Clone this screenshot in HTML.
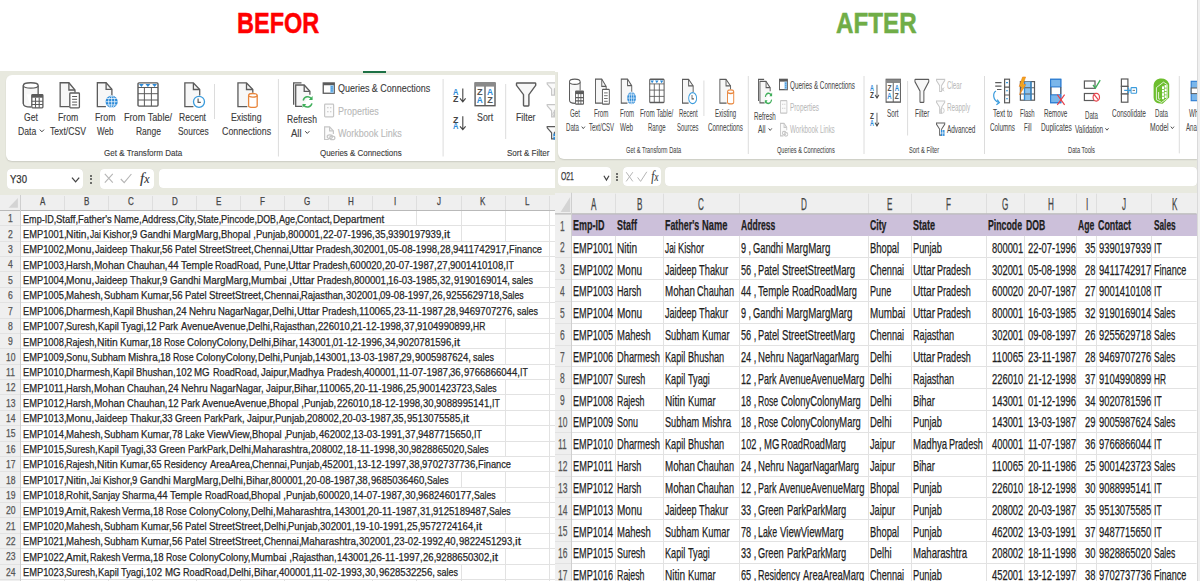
<!DOCTYPE html>
<html><head><meta charset="utf-8"><style>
html,body{margin:0;padding:0;background:#fff;}
body{width:1200px;height:581px;position:relative;overflow:hidden;font-family:"Liberation Sans",sans-serif;}
.t{position:absolute;white-space:nowrap;transform-origin:0 0;-webkit-text-stroke:0.25px currentColor;}
.r{position:absolute;}
.clip{position:absolute;overflow:hidden;}
svg{position:absolute;left:0;top:0;}
</style></head><body>
<div class="t" style="left:237.40px;top:8.32px;font-size:29.506px;line-height:29.506px;color:#ff0000;transform:scaleX(0.7969);font-weight:bold;-webkit-text-stroke:0.5px #ff0000;">BEFOR</div>
<div class="t" style="left:835.60px;top:8.32px;font-size:29.506px;line-height:29.506px;color:#70ad47;transform:scaleX(0.8196);font-weight:bold;-webkit-text-stroke:0.5px #70ad47;">AFTER</div>
<div class="clip" style="left:0;top:0;width:555px;height:581px;">
<div class="r" style="left:0.00px;top:71.00px;width:555.00px;height:510.00px;background:#e8e9df;"></div>
<div class="r" style="left:363.00px;top:71.00px;width:23.30px;height:2.30px;background:#1e7145;"></div>
<div class="r" style="left:6.00px;top:75.00px;width:560.00px;height:86.20px;background:#fff;border-radius:6px;box-shadow:0 1px 1.5px rgba(0,0,0,0.13);"></div>
<div class="t" style="left:23.90px;top:111.99px;font-size:10.756px;line-height:10.756px;color:#3b3b3b;transform:scaleX(0.7960);-webkit-text-stroke:0.12px currentColor;">Get</div>
<div class="t" style="left:17.70px;top:125.89px;font-size:10.756px;line-height:10.756px;color:#3b3b3b;transform:scaleX(0.8055);-webkit-text-stroke:0.12px currentColor;">Data</div>
<div class="t" style="left:57.70px;top:111.99px;font-size:10.756px;line-height:10.756px;color:#3b3b3b;transform:scaleX(0.8089);-webkit-text-stroke:0.12px currentColor;">From</div>
<div class="t" style="left:50.00px;top:125.89px;font-size:10.756px;line-height:10.756px;color:#3b3b3b;transform:scaleX(0.8030);-webkit-text-stroke:0.12px currentColor;">Text/CSV</div>
<div class="t" style="left:95.00px;top:111.99px;font-size:10.756px;line-height:10.756px;color:#3b3b3b;transform:scaleX(0.8169);-webkit-text-stroke:0.12px currentColor;">From</div>
<div class="t" style="left:97.05px;top:125.89px;font-size:10.756px;line-height:10.756px;color:#3b3b3b;transform:scaleX(0.7527);-webkit-text-stroke:0.12px currentColor;">Web</div>
<div class="t" style="left:124.30px;top:111.99px;font-size:10.756px;line-height:10.756px;color:#3b3b3b;transform:scaleX(0.8500);-webkit-text-stroke:0.12px currentColor;">From Table/</div>
<div class="t" style="left:135.90px;top:125.89px;font-size:10.756px;line-height:10.756px;color:#3b3b3b;transform:scaleX(0.7887);-webkit-text-stroke:0.12px currentColor;">Range</div>
<div class="t" style="left:179.30px;top:111.99px;font-size:10.756px;line-height:10.756px;color:#3b3b3b;transform:scaleX(0.7923);-webkit-text-stroke:0.12px currentColor;">Recent</div>
<div class="t" style="left:177.60px;top:125.89px;font-size:10.756px;line-height:10.756px;color:#3b3b3b;transform:scaleX(0.7780);-webkit-text-stroke:0.12px currentColor;">Sources</div>
<div class="t" style="left:230.55px;top:111.99px;font-size:10.756px;line-height:10.756px;color:#3b3b3b;transform:scaleX(0.8098);-webkit-text-stroke:0.12px currentColor;">Existing</div>
<div class="t" style="left:221.50px;top:125.89px;font-size:10.756px;line-height:10.756px;color:#3b3b3b;transform:scaleX(0.8212);-webkit-text-stroke:0.12px currentColor;">Connections</div>
<div class="t" style="left:286.60px;top:113.69px;font-size:10.756px;line-height:10.756px;color:#3b3b3b;transform:scaleX(0.7939);-webkit-text-stroke:0.12px currentColor;">Refresh</div>
<div class="t" style="left:291.25px;top:127.69px;font-size:10.756px;line-height:10.756px;color:#3b3b3b;transform:scaleX(0.8784);-webkit-text-stroke:0.12px currentColor;">All</div>
<div class="t" style="left:477.00px;top:112.09px;font-size:10.756px;line-height:10.756px;color:#3b3b3b;transform:scaleX(0.8212);-webkit-text-stroke:0.12px currentColor;">Sort</div>
<div class="t" style="left:516.20px;top:112.09px;font-size:10.756px;line-height:10.756px;color:#3b3b3b;transform:scaleX(0.8158);-webkit-text-stroke:0.12px currentColor;">Filter</div>
<div class="t" style="left:337.80px;top:83.29px;font-size:10.756px;line-height:10.756px;color:#3b3b3b;transform:scaleX(0.8336);-webkit-text-stroke:0.12px currentColor;">Queries &amp; Connections</div>
<div class="t" style="left:338.00px;top:106.09px;font-size:10.756px;line-height:10.756px;color:#b9b9b9;transform:scaleX(0.8323);-webkit-text-stroke:0.12px currentColor;">Properties</div>
<div class="t" style="left:338.00px;top:127.79px;font-size:10.756px;line-height:10.756px;color:#b9b9b9;transform:scaleX(0.8359);-webkit-text-stroke:0.12px currentColor;">Workbook Links</div>
<div class="t" style="left:103.75px;top:148.65px;font-size:9.157px;line-height:9.157px;color:#3b3b3b;transform:scaleX(0.8792);-webkit-text-stroke:0.12px currentColor;">Get &amp; Transform Data</div>
<div class="t" style="left:320.00px;top:148.65px;font-size:9.157px;line-height:9.157px;color:#3b3b3b;transform:scaleX(0.8687);-webkit-text-stroke:0.12px currentColor;">Queries &amp; Connections</div>
<div class="t" style="left:507.40px;top:148.65px;font-size:9.157px;line-height:9.157px;color:#3b3b3b;transform:scaleX(0.8813);-webkit-text-stroke:0.12px currentColor;">Sort &amp; Filter</div>
<div class="r" style="left:7.00px;top:169.00px;width:76.00px;height:20.00px;background:#fff;border-radius:4px;box-shadow:0 0 0.5px rgba(0,0,0,0.15);"></div>
<div class="t" style="left:10.20px;top:173.60px;font-size:11.337px;line-height:11.337px;color:#333;transform:scaleX(0.8427);">Y30</div>
<div class="r" style="left:90.40px;top:174.80px;width:2.00px;height:2.00px;background:#444;border-radius:1px;"></div>
<div class="r" style="left:90.40px;top:178.20px;width:2.00px;height:2.00px;background:#444;border-radius:1px;"></div>
<div class="r" style="left:90.40px;top:181.60px;width:2.00px;height:2.00px;background:#444;border-radius:1px;"></div>
<div class="r" style="left:99.70px;top:169.00px;width:54.60px;height:19.60px;background:#fff;border-radius:4px;box-shadow:0 0 0.5px rgba(0,0,0,0.15);"></div>
<div class="r" style="left:159.20px;top:169.00px;width:400.00px;height:19.30px;background:#fff;border-radius:4px;box-shadow:0 0 0.5px rgba(0,0,0,0.15);"></div>
<svg width="1200" height="581" viewBox="0 0 1200 581">

<defs>
<g id="i-getdata" fill="none" stroke="#5b5b5b" stroke-width="1.3">
  <path d="M0.65 3.3 V21.6 C0.65 23.6 4 24.9 8.3 24.9" fill="#f7f7f7"/>
  <path d="M0.65 3.3 H15.5 V12" fill="#f7f7f7" stroke="none"/>
  <rect x="0.65" y="3.3" width="14.8" height="9" fill="#f7f7f7" stroke="none"/>
  <path d="M0.65 3.3 V21.6 M15.45 3.3 V12"/>
  <ellipse cx="8.05" cy="3.3" rx="7.4" ry="2.65" fill="#fff"/>
  <rect x="9.1" y="12.6" width="11.1" height="13.1" rx="0.8" fill="#fff"/>
  <rect x="9.1" y="12.6" width="11.1" height="3" fill="#5b5b5b" stroke="none"/>
  <path d="M9.1 19.1 H20.2 M9.1 22.4 H20.2 M12.8 15.6 V25.7 M16.5 15.6 V25.7" stroke-width="1.1"/>
</g>
<g id="i-textcsv" fill="none" stroke="#5b5b5b" stroke-width="1.3">
  <path d="M9.6 24.6 H0.65 V0.65 H9.4 L15.5 7.9 V10.4" fill="#f7f7f7"/>
  <path d="M9.4 0.65 V7.9 H15.5"/>
  <rect x="10.3" y="10.9" width="9.6" height="14.8" rx="0.8" fill="#fff"/>
  <path d="M12.6 14.4 H17.6 M12.6 17.2 H17.6 M12.6 20 H17.6 M12.6 22.8 H17.6" stroke-width="1"/>
</g>
<g id="i-web" fill="none" stroke="#5b5b5b" stroke-width="1.3">
  <path d="M9.2 24.6 H0.65 V0.65 H9.4 L15.2 7.2 V13.6" fill="#f7f7f7"/>
  <path d="M9.4 0.65 V7.2 H15.2"/>
  <circle cx="14.95" cy="19.6" r="6.1" fill="#2b8ad8" stroke="none"/>
  <path d="M8.9 19.6 H21 M9.9 16.4 H20 M9.9 22.8 H20 M14.95 13.5 V25.7" stroke="#fff" stroke-width="0.7"/>
  <ellipse cx="14.95" cy="19.6" rx="3.1" ry="6.1" stroke="#fff" stroke-width="0.7"/>
</g>
<g id="i-table" fill="none" stroke="#5b5b5b" stroke-width="1.4">
  <rect x="0.7" y="0.7" width="20" height="23.2" rx="1" fill="#fff"/>
  <path d="M0.7 5.3 H20.7 M0.7 11.5 H20.7 M0.7 17.8 H20.7 M7.1 5.3 V23.9 M14.1 5.3 V23.9" stroke-width="1.0"/>
  <path d="M1.7 1.9 H6.5 L4.1 4.7 Z M8.2 1.9 H13 L10.6 4.7 Z M14.9 1.9 H19.7 L17.3 4.7 Z" fill="#2b8ad8" stroke="none"/>
</g>
<g id="i-recent" fill="none" stroke="#5b5b5b" stroke-width="1.3">
  <path d="M9.2 24.4 H0.65 V0.65 H9.2 L15.5 7.2 V13.2" fill="#f7f7f7"/>
  <path d="M9.2 0.65 V7.2 H15.5"/>
  <circle cx="14.8" cy="19.5" r="5.5" fill="#fff" stroke="#3a9bdc" stroke-width="1.3"/>
  <path d="M13.9 16.3 V20.1 H16.6" stroke-width="1.2"/>
</g>
<g id="i-existing" fill="none" stroke="#5b5b5b" stroke-width="1.3">
  <path d="M10 24.4 H0.65 V0.65 H9.2 L15.5 7.2 V10.5" fill="#f7f7f7"/>
  <path d="M9.2 0.65 V7.2 H15.5"/>
  <path d="M11.3 13 V23.8 C11.3 25.6 19.9 25.6 19.9 23.8 V13" fill="#fff" stroke="#e8853b"/>
  <ellipse cx="15.6" cy="13" rx="4.3" ry="1.8" fill="#fff" stroke="#e8853b"/>
</g>
<g id="i-refresh" fill="none" stroke="#5b5b5b" stroke-width="1.3">
  <path d="M0.65 22.4 V0.65 H8.5"/>
  <path d="M9 24.1 H2.7 V2.7 H11.2 L16.9 9 V12.5" fill="#f7f7f7"/>
  <path d="M11.2 2.7 V9 H16.9"/>
  <path d="M10.2 18.2 A4.6 4.6 0 0 1 18.6 16.6" stroke="#3fae5a" stroke-width="1.5"/>
  <path d="M18.9 21 A4.6 4.6 0 0 1 10.5 22.6" stroke="#3fae5a" stroke-width="1.5"/>
  <path d="M19.6 13.8 V17.6 H15.8 Z M9.5 25.4 V21.6 H13.3 Z" fill="#3fae5a" stroke="none"/>
</g>
<g id="i-qc" fill="none" stroke="#5b5b5b" stroke-width="1.3">
  <rect x="0.65" y="0.65" width="11" height="10.3" fill="#fff"/>
  <rect x="0.65" y="0.65" width="11" height="2.3" fill="#5b5b5b" stroke="none"/>
  <rect x="7.6" y="3" width="3.4" height="7.6" fill="#8cc3ee" stroke="none"/>
  <path d="M8.4 4.6 H10.2 M8.4 6.6 H10.2 M8.4 8.6 H10.2" stroke="#2b8ad8" stroke-width="0.9"/>
</g>
<g id="i-props" fill="none" stroke="#c6c6c6" stroke-width="1.2">
  <rect x="0.6" y="0.6" width="9" height="12.6" rx="0.8" fill="#fbfbfb"/>
  <path d="M3 4.2 H4.6 M3 8.2 H4.6 M6 4.2 H7.4 M6 8.2 H7.4" stroke-width="1.1"/>
</g>
<g id="i-wblinks" fill="none" stroke="#c6c6c6" stroke-width="1.2">
  <path d="M4.8 13.2 H0.6 V0.6 H5.6 L9.4 4.6 V7.6" fill="#fbfbfb"/>
  <path d="M5.6 0.6 V4.6 H9.4"/>
  <ellipse cx="5.8" cy="10.4" rx="2.6" ry="1.8"/>
  <ellipse cx="8.3" cy="11.6" rx="2.6" ry="1.8"/>
</g>
<g id="i-sortaz">
  <text x="0" y="6.5" font-family="Liberation Sans" font-weight="600" font-size="9" fill="#2b8ad8" textLength="5.4" lengthAdjust="spacingAndGlyphs">A</text>
  <text x="0" y="13.4" font-family="Liberation Sans" font-weight="600" font-size="9" fill="#444" textLength="5.4" lengthAdjust="spacingAndGlyphs">Z</text>
  <path d="M9.7 0.2 V13.2 M6.9 10.2 L9.7 13.6 L12.5 10.2" fill="none" stroke="#444" stroke-width="1.1"/>
</g>
<g id="i-sortza">
  <text x="0" y="6.5" font-family="Liberation Sans" font-weight="600" font-size="9" fill="#444" textLength="5.4" lengthAdjust="spacingAndGlyphs">Z</text>
  <text x="0" y="13.4" font-family="Liberation Sans" font-weight="600" font-size="9" fill="#2b8ad8" textLength="5.4" lengthAdjust="spacingAndGlyphs">A</text>
  <path d="M9.7 0.2 V13.2 M6.9 10.2 L9.7 13.6 L12.5 10.2" fill="none" stroke="#444" stroke-width="1.1"/>
</g>
<g id="i-sort">
  <rect x="0.7" y="0.7" width="19.9" height="22.7" fill="#fff" stroke="#5b5b5b" stroke-width="1.4"/>
  <rect x="0.7" y="0.7" width="19.9" height="3.6" fill="#8a8a8a"/>
  <path d="M10.6 4 V23.4" stroke="#5b5b5b" stroke-width="1.3"/>
  <text x="2.6" y="12.4" font-family="Liberation Sans" font-size="8.6" font-weight="bold" fill="#555" textLength="5.6" lengthAdjust="spacingAndGlyphs">Z</text>
  <text x="2.4" y="20.8" font-family="Liberation Sans" font-size="8.6" font-weight="bold" fill="#2b8ad8" textLength="6" lengthAdjust="spacingAndGlyphs">A</text>
  <text x="12.6" y="12.4" font-family="Liberation Sans" font-size="8.6" font-weight="bold" fill="#2b8ad8" textLength="6" lengthAdjust="spacingAndGlyphs">A</text>
  <text x="12.8" y="20.8" font-family="Liberation Sans" font-size="8.6" font-weight="bold" fill="#555" textLength="5.6" lengthAdjust="spacingAndGlyphs">Z</text>
</g>
<g id="i-filter" fill="none" stroke="#5b5b5b" stroke-width="1.4">
  <path d="M0.9 1.2 C0.9 0.8 1.2 0.7 1.6 0.7 H19.4 C19.8 0.7 20.1 0.8 20.1 1.2 V3 L13.3 12.4 V23 C13.3 23.5 13 23.7 12.6 23.7 H8.6 C8.2 23.7 7.9 23.5 7.9 23 V12.4 L0.9 3 Z" fill="#f7f7f7"/>
</g>
<g id="i-sfunnel" fill="none" stroke="#c6c6c6" stroke-width="1.2">
  <path d="M0.6 0.6 H12.2 V1.8 L7.8 6.8 V12.8 H5 V6.8 L0.6 1.8 Z" fill="#fafafa"/>
</g>
<g id="i-clear" fill="none" stroke="#c6c6c6" stroke-width="1.2">
  <path d="M0.6 0.6 H12.2 V1.8 L7.8 6.8 V12.8 H5 V6.8 L0.6 1.8 Z" fill="#fafafa"/>
  <path d="M7.8 8.8 L11.2 12.6 M11.2 8.8 L7.8 12.6" stroke-width="1"/>
</g>
<g id="i-reapply" fill="none" stroke="#c6c6c6" stroke-width="1.2">
  <path d="M0.6 0.6 H12.2 V1.8 L7.8 6.8 V12.8 H5 V6.8 L0.6 1.8 Z" fill="#fafafa"/>
  <circle cx="8.8" cy="10.2" r="2.6" stroke-width="1"/>
</g>
<g id="i-advanced" fill="none" stroke="#5b5b5b" stroke-width="1.2">
  <path d="M0.6 0.6 H12.2 V1.8 L7.8 6.8 V12.8 H5 V6.8 L0.6 1.8 Z" fill="#fafafa"/>
  <rect x="6.8" y="7.6" width="5" height="6" fill="#2b8ad8" stroke="none"/>
  <path d="M6.8 10.6 H11.8 M9.3 7.6 V13.6" stroke="#fff" stroke-width="0.8"/>
</g>
</defs>

<use href="#i-getdata" transform="translate(22.70 82.10)"/>
<use href="#i-textcsv" transform="translate(59.50 82.10)"/>
<use href="#i-web" transform="translate(96.70 82.10)"/>
<use href="#i-table" transform="translate(137.30 82.20)"/>
<use href="#i-recent" transform="translate(184.20 82.30)"/>
<use href="#i-existing" transform="translate(237.30 82.30)"/>
<use href="#i-refresh" transform="translate(293.00 82.30)"/>
<use href="#i-qc" transform="translate(322.60 82.30)"/>
<use href="#i-props" transform="translate(324.00 103.60)"/>
<use href="#i-wblinks" transform="translate(324.00 126.30)"/>
<use href="#i-sortaz" transform="translate(453.10 88.20)"/>
<use href="#i-sortza" transform="translate(453.10 116.10)"/>
<use href="#i-sort" transform="translate(474.40 82.30)"/>
<use href="#i-filter" transform="translate(515.60 82.30)"/>
<use href="#i-clear" transform="translate(546.60 82.30)"/>
<use href="#i-reapply" transform="translate(546.60 104.00)"/>
<use href="#i-advanced" transform="translate(546.60 126.00)"/>
<line x1="214.50" y1="84.00" x2="214.50" y2="119.00" stroke="#dcdcdc" stroke-width="1.00"/>
<line x1="278.40" y1="79.00" x2="278.40" y2="156.50" stroke="#dcdcdc" stroke-width="1.00"/>
<line x1="443.10" y1="79.00" x2="443.10" y2="156.50" stroke="#dcdcdc" stroke-width="1.00"/>
<line x1="505.70" y1="84.00" x2="505.70" y2="139.00" stroke="#dcdcdc" stroke-width="1.00"/>
<path d="M39.80 129.60 L41.90 131.80 L44.00 129.60" fill="none" stroke="#444" stroke-width="1.00"/>
<path d="M305.20 131.20 L307.30 133.40 L309.40 131.20" fill="none" stroke="#444" stroke-width="1.00"/>
<path d="M72.00 177.60 L75.60 181.80 L79.20 177.60" fill="none" stroke="#444" stroke-width="1.30"/>
</svg>
<svg width="1200" height="581"><path d="M104.8 173.9 L112.8 182.6 M112.8 173.9 L104.8 182.6" stroke="#b5b5b5" stroke-width="1.1" fill="none"/><path d="M120.8 179 L124.2 182.6 L131.4 174" stroke="#b5b5b5" stroke-width="1.1" fill="none"/></svg>
<svg width="1200" height="581"><text x="140" y="183.3" font-family="Liberation Serif" font-style="italic" font-size="15" fill="#333" stroke="#333" stroke-width="0.1">f</text><text x="144.2" y="183.3" font-family="Liberation Serif" font-style="italic" font-size="12" fill="#333" stroke="#333" stroke-width="0.1">x</text></svg>
<div class="r" style="left:0.00px;top:195.00px;width:555.00px;height:15.50px;background:#efefef;"></div>
<div class="r" style="left:0.00px;top:210.50px;width:20.50px;height:370.50px;background:#efefef;"></div>
<div class="r" style="left:20.50px;top:210.50px;width:534.50px;height:370.50px;background:#fff;"></div>
<svg width="1200" height="581"><path d="M17.9 198 V207.7 H8.6 Z" fill="#d4d4d4"/></svg>
<svg width="1200" height="581">
<line x1="0" y1="225.50" x2="555" y2="225.50" stroke="#e2e2e2" stroke-width="1"/>
<line x1="0" y1="241.50" x2="555" y2="241.50" stroke="#e2e2e2" stroke-width="1"/>
<line x1="0" y1="256.50" x2="555" y2="256.50" stroke="#e2e2e2" stroke-width="1"/>
<line x1="0" y1="271.50" x2="555" y2="271.50" stroke="#e2e2e2" stroke-width="1"/>
<line x1="0" y1="287.50" x2="555" y2="287.50" stroke="#e2e2e2" stroke-width="1"/>
<line x1="0" y1="302.50" x2="555" y2="302.50" stroke="#e2e2e2" stroke-width="1"/>
<line x1="0" y1="318.50" x2="555" y2="318.50" stroke="#e2e2e2" stroke-width="1"/>
<line x1="0" y1="333.50" x2="555" y2="333.50" stroke="#e2e2e2" stroke-width="1"/>
<line x1="0" y1="348.50" x2="555" y2="348.50" stroke="#e2e2e2" stroke-width="1"/>
<line x1="0" y1="364.50" x2="555" y2="364.50" stroke="#e2e2e2" stroke-width="1"/>
<line x1="0" y1="379.50" x2="555" y2="379.50" stroke="#e2e2e2" stroke-width="1"/>
<line x1="0" y1="394.50" x2="555" y2="394.50" stroke="#e2e2e2" stroke-width="1"/>
<line x1="0" y1="410.50" x2="555" y2="410.50" stroke="#e2e2e2" stroke-width="1"/>
<line x1="0" y1="425.50" x2="555" y2="425.50" stroke="#e2e2e2" stroke-width="1"/>
<line x1="0" y1="441.50" x2="555" y2="441.50" stroke="#e2e2e2" stroke-width="1"/>
<line x1="0" y1="456.50" x2="555" y2="456.50" stroke="#e2e2e2" stroke-width="1"/>
<line x1="0" y1="471.50" x2="555" y2="471.50" stroke="#e2e2e2" stroke-width="1"/>
<line x1="0" y1="487.50" x2="555" y2="487.50" stroke="#e2e2e2" stroke-width="1"/>
<line x1="0" y1="502.50" x2="555" y2="502.50" stroke="#e2e2e2" stroke-width="1"/>
<line x1="0" y1="517.50" x2="555" y2="517.50" stroke="#e2e2e2" stroke-width="1"/>
<line x1="0" y1="533.50" x2="555" y2="533.50" stroke="#e2e2e2" stroke-width="1"/>
<line x1="0" y1="548.50" x2="555" y2="548.50" stroke="#e2e2e2" stroke-width="1"/>
<line x1="0" y1="564.50" x2="555" y2="564.50" stroke="#e2e2e2" stroke-width="1"/>
<line x1="0" y1="579.50" x2="555" y2="579.50" stroke="#e2e2e2" stroke-width="1"/>
<line x1="0" y1="594.50" x2="555" y2="594.50" stroke="#e2e2e2" stroke-width="1"/>
<line x1="64.50" y1="196.00" x2="64.50" y2="210.50" stroke="#dedede" stroke-width="1"/>
<line x1="64.50" y1="579.38" x2="64.50" y2="594.75" stroke="#e2e2e2" stroke-width="1"/>
<line x1="108.50" y1="196.00" x2="108.50" y2="210.50" stroke="#dedede" stroke-width="1"/>
<line x1="108.50" y1="579.38" x2="108.50" y2="594.75" stroke="#e2e2e2" stroke-width="1"/>
<line x1="152.50" y1="196.00" x2="152.50" y2="210.50" stroke="#dedede" stroke-width="1"/>
<line x1="152.50" y1="579.38" x2="152.50" y2="594.75" stroke="#e2e2e2" stroke-width="1"/>
<line x1="196.50" y1="196.00" x2="196.50" y2="210.50" stroke="#dedede" stroke-width="1"/>
<line x1="196.50" y1="579.38" x2="196.50" y2="594.75" stroke="#e2e2e2" stroke-width="1"/>
<line x1="240.50" y1="196.00" x2="240.50" y2="210.50" stroke="#dedede" stroke-width="1"/>
<line x1="240.50" y1="579.38" x2="240.50" y2="594.75" stroke="#e2e2e2" stroke-width="1"/>
<line x1="284.50" y1="196.00" x2="284.50" y2="210.50" stroke="#dedede" stroke-width="1"/>
<line x1="284.50" y1="579.38" x2="284.50" y2="594.75" stroke="#e2e2e2" stroke-width="1"/>
<line x1="328.50" y1="196.00" x2="328.50" y2="210.50" stroke="#dedede" stroke-width="1"/>
<line x1="328.50" y1="579.38" x2="328.50" y2="594.75" stroke="#e2e2e2" stroke-width="1"/>
<line x1="372.50" y1="196.00" x2="372.50" y2="210.50" stroke="#dedede" stroke-width="1"/>
<line x1="372.50" y1="579.38" x2="372.50" y2="594.75" stroke="#e2e2e2" stroke-width="1"/>
<line x1="416.50" y1="196.00" x2="416.50" y2="210.50" stroke="#dedede" stroke-width="1"/>
<line x1="416.50" y1="210.50" x2="416.50" y2="225.87" stroke="#e2e2e2" stroke-width="1"/>
<line x1="416.50" y1="579.38" x2="416.50" y2="594.75" stroke="#e2e2e2" stroke-width="1"/>
<line x1="461.50" y1="196.00" x2="461.50" y2="210.50" stroke="#dedede" stroke-width="1"/>
<line x1="461.50" y1="210.50" x2="461.50" y2="225.87" stroke="#e2e2e2" stroke-width="1"/>
<line x1="461.50" y1="225.87" x2="461.50" y2="241.24" stroke="#e2e2e2" stroke-width="1"/>
<line x1="461.50" y1="471.79" x2="461.50" y2="487.16" stroke="#e2e2e2" stroke-width="1"/>
<line x1="461.50" y1="564.01" x2="461.50" y2="579.38" stroke="#e2e2e2" stroke-width="1"/>
<line x1="461.50" y1="579.38" x2="461.50" y2="594.75" stroke="#e2e2e2" stroke-width="1"/>
<line x1="505.50" y1="196.00" x2="505.50" y2="210.50" stroke="#dedede" stroke-width="1"/>
<line x1="505.50" y1="210.50" x2="505.50" y2="225.87" stroke="#e2e2e2" stroke-width="1"/>
<line x1="505.50" y1="225.87" x2="505.50" y2="241.24" stroke="#e2e2e2" stroke-width="1"/>
<line x1="505.50" y1="318.09" x2="505.50" y2="333.46" stroke="#e2e2e2" stroke-width="1"/>
<line x1="505.50" y1="333.46" x2="505.50" y2="348.83" stroke="#e2e2e2" stroke-width="1"/>
<line x1="505.50" y1="348.83" x2="505.50" y2="364.20" stroke="#e2e2e2" stroke-width="1"/>
<line x1="505.50" y1="379.57" x2="505.50" y2="394.94" stroke="#e2e2e2" stroke-width="1"/>
<line x1="505.50" y1="394.94" x2="505.50" y2="410.31" stroke="#e2e2e2" stroke-width="1"/>
<line x1="505.50" y1="410.31" x2="505.50" y2="425.68" stroke="#e2e2e2" stroke-width="1"/>
<line x1="505.50" y1="425.68" x2="505.50" y2="441.05" stroke="#e2e2e2" stroke-width="1"/>
<line x1="505.50" y1="441.05" x2="505.50" y2="456.42" stroke="#e2e2e2" stroke-width="1"/>
<line x1="505.50" y1="471.79" x2="505.50" y2="487.16" stroke="#e2e2e2" stroke-width="1"/>
<line x1="505.50" y1="487.16" x2="505.50" y2="502.53" stroke="#e2e2e2" stroke-width="1"/>
<line x1="505.50" y1="517.90" x2="505.50" y2="533.27" stroke="#e2e2e2" stroke-width="1"/>
<line x1="505.50" y1="548.64" x2="505.50" y2="564.01" stroke="#e2e2e2" stroke-width="1"/>
<line x1="505.50" y1="564.01" x2="505.50" y2="579.38" stroke="#e2e2e2" stroke-width="1"/>
<line x1="505.50" y1="579.38" x2="505.50" y2="594.75" stroke="#e2e2e2" stroke-width="1"/>
<line x1="549.50" y1="196.00" x2="549.50" y2="210.50" stroke="#dedede" stroke-width="1"/>
<line x1="549.50" y1="210.50" x2="549.50" y2="225.87" stroke="#e2e2e2" stroke-width="1"/>
<line x1="549.50" y1="225.87" x2="549.50" y2="241.24" stroke="#e2e2e2" stroke-width="1"/>
<line x1="549.50" y1="241.24" x2="549.50" y2="256.61" stroke="#e2e2e2" stroke-width="1"/>
<line x1="549.50" y1="256.61" x2="549.50" y2="271.98" stroke="#e2e2e2" stroke-width="1"/>
<line x1="549.50" y1="271.98" x2="549.50" y2="287.35" stroke="#e2e2e2" stroke-width="1"/>
<line x1="549.50" y1="287.35" x2="549.50" y2="302.72" stroke="#e2e2e2" stroke-width="1"/>
<line x1="549.50" y1="302.72" x2="549.50" y2="318.09" stroke="#e2e2e2" stroke-width="1"/>
<line x1="549.50" y1="318.09" x2="549.50" y2="333.46" stroke="#e2e2e2" stroke-width="1"/>
<line x1="549.50" y1="333.46" x2="549.50" y2="348.83" stroke="#e2e2e2" stroke-width="1"/>
<line x1="549.50" y1="348.83" x2="549.50" y2="364.20" stroke="#e2e2e2" stroke-width="1"/>
<line x1="549.50" y1="364.20" x2="549.50" y2="379.57" stroke="#e2e2e2" stroke-width="1"/>
<line x1="549.50" y1="379.57" x2="549.50" y2="394.94" stroke="#e2e2e2" stroke-width="1"/>
<line x1="549.50" y1="394.94" x2="549.50" y2="410.31" stroke="#e2e2e2" stroke-width="1"/>
<line x1="549.50" y1="410.31" x2="549.50" y2="425.68" stroke="#e2e2e2" stroke-width="1"/>
<line x1="549.50" y1="425.68" x2="549.50" y2="441.05" stroke="#e2e2e2" stroke-width="1"/>
<line x1="549.50" y1="441.05" x2="549.50" y2="456.42" stroke="#e2e2e2" stroke-width="1"/>
<line x1="549.50" y1="456.42" x2="549.50" y2="471.79" stroke="#e2e2e2" stroke-width="1"/>
<line x1="549.50" y1="471.79" x2="549.50" y2="487.16" stroke="#e2e2e2" stroke-width="1"/>
<line x1="549.50" y1="487.16" x2="549.50" y2="502.53" stroke="#e2e2e2" stroke-width="1"/>
<line x1="549.50" y1="502.53" x2="549.50" y2="517.90" stroke="#e2e2e2" stroke-width="1"/>
<line x1="549.50" y1="517.90" x2="549.50" y2="533.27" stroke="#e2e2e2" stroke-width="1"/>
<line x1="549.50" y1="533.27" x2="549.50" y2="548.64" stroke="#e2e2e2" stroke-width="1"/>
<line x1="549.50" y1="548.64" x2="549.50" y2="564.01" stroke="#e2e2e2" stroke-width="1"/>
<line x1="549.50" y1="564.01" x2="549.50" y2="579.38" stroke="#e2e2e2" stroke-width="1"/>
<line x1="549.50" y1="579.38" x2="549.50" y2="594.75" stroke="#e2e2e2" stroke-width="1"/>
<line x1="0" y1="210.50" x2="555" y2="210.50" stroke="#b9b9b9" stroke-width="1.2"/>
<line x1="20.50" y1="195.00" x2="20.50" y2="581" stroke="#cfcfcf" stroke-width="1"/>
</svg>
<div class="t" style="left:39.85px;top:196.91px;font-size:10.029px;line-height:10.029px;color:#444;transform:scaleX(0.8000);">A</div>
<div class="t" style="left:83.90px;top:196.91px;font-size:10.029px;line-height:10.029px;color:#444;transform:scaleX(0.8000);">B</div>
<div class="t" style="left:127.73px;top:196.91px;font-size:10.029px;line-height:10.029px;color:#444;transform:scaleX(0.8000);">C</div>
<div class="t" style="left:171.78px;top:196.91px;font-size:10.029px;line-height:10.029px;color:#444;transform:scaleX(0.8000);">D</div>
<div class="t" style="left:216.05px;top:196.91px;font-size:10.029px;line-height:10.029px;color:#444;transform:scaleX(0.8000);">E</div>
<div class="t" style="left:260.32px;top:196.91px;font-size:10.029px;line-height:10.029px;color:#444;transform:scaleX(0.8000);">F</div>
<div class="t" style="left:303.70px;top:196.91px;font-size:10.029px;line-height:10.029px;color:#444;transform:scaleX(0.8000);">G</div>
<div class="t" style="left:347.98px;top:196.91px;font-size:10.029px;line-height:10.029px;color:#444;transform:scaleX(0.8000);">H</div>
<div class="t" style="left:393.81px;top:196.91px;font-size:10.029px;line-height:10.029px;color:#444;transform:scaleX(0.8000);">I</div>
<div class="t" style="left:436.97px;top:196.91px;font-size:10.029px;line-height:10.029px;color:#444;transform:scaleX(0.8000);">J</div>
<div class="t" style="left:480.35px;top:196.91px;font-size:10.029px;line-height:10.029px;color:#444;transform:scaleX(0.8000);">K</div>
<div class="t" style="left:524.84px;top:196.91px;font-size:10.029px;line-height:10.029px;color:#444;transform:scaleX(0.8000);">L</div>
<div class="t" style="left:567.78px;top:196.91px;font-size:10.029px;line-height:10.029px;color:#444;transform:scaleX(0.8000);">M</div>
<div class="t" style="left:8.01px;top:213.29px;font-size:10.756px;line-height:10.756px;color:#555;transform:scaleX(0.8000);">1</div>
<div class="t" style="left:22.90px;top:212.55px;font-size:11.628px;line-height:11.628px;color:#262626;transform:scaleX(0.7846);">Emp-ID,</div>
<div class="t" style="left:56.36px;top:212.55px;font-size:11.628px;line-height:11.628px;color:#262626;transform:scaleX(0.8190);">Staff,</div>
<div class="t" style="left:78.42px;top:212.55px;font-size:11.628px;line-height:11.628px;color:#262626;transform:scaleX(0.8088);">Father&#x27;s</div>
<div class="t" style="left:114.43px;top:212.55px;font-size:11.628px;line-height:11.628px;color:#262626;transform:scaleX(0.8063);">Name,</div>
<div class="t" style="left:142.05px;top:212.55px;font-size:11.628px;line-height:11.628px;color:#262626;transform:scaleX(0.7904);">Address,</div>
<div class="t" style="left:178.31px;top:212.55px;font-size:11.628px;line-height:11.628px;color:#262626;transform:scaleX(0.8311);">City,</div>
<div class="t" style="left:196.92px;top:212.55px;font-size:11.628px;line-height:11.628px;color:#262626;transform:scaleX(0.8017);">State,</div>
<div class="t" style="left:221.28px;top:212.55px;font-size:11.628px;line-height:11.628px;color:#262626;transform:scaleX(0.7984);">Pincode,</div>
<div class="t" style="left:257.41px;top:212.55px;font-size:11.628px;line-height:11.628px;color:#262626;transform:scaleX(0.7532);">DOB,</div>
<div class="t" style="left:278.83px;top:212.55px;font-size:11.628px;line-height:11.628px;color:#262626;transform:scaleX(0.7766);">Age,</div>
<div class="t" style="left:297.40px;top:212.55px;font-size:11.628px;line-height:11.628px;color:#262626;transform:scaleX(0.8136);">Contact,</div>
<div class="t" style="left:332.64px;top:212.55px;font-size:11.628px;line-height:11.628px;color:#262626;transform:scaleX(0.8438);">Department</div>
<div class="t" style="left:8.01px;top:228.66px;font-size:10.756px;line-height:10.756px;color:#555;transform:scaleX(0.8000);">2</div>
<div class="t" style="left:22.90px;top:227.92px;font-size:11.628px;line-height:11.628px;color:#262626;transform:scaleX(0.8026);">EMP1001,</div>
<div class="t" style="left:66.48px;top:227.92px;font-size:11.628px;line-height:11.628px;color:#262626;transform:scaleX(0.8806);">Nitin,</div>
<div class="t" style="left:89.81px;top:227.92px;font-size:11.628px;line-height:11.628px;color:#262626;transform:scaleX(0.7281);">Jai</div>
<div class="t" style="left:103.01px;top:227.92px;font-size:11.628px;line-height:11.628px;color:#262626;transform:scaleX(0.8271);">Kishor,</div>
<div class="t" style="left:132.42px;top:227.92px;font-size:11.628px;line-height:11.628px;color:#262626;transform:scaleX(0.8256);">9</div>
<div class="t" style="left:140.14px;top:227.92px;font-size:11.628px;line-height:11.628px;color:#262626;transform:scaleX(0.8191);">Gandhi</div>
<div class="t" style="left:173.23px;top:227.92px;font-size:11.628px;line-height:11.628px;color:#262626;transform:scaleX(0.8538);">MargMarg,</div>
<div class="t" style="left:221.23px;top:227.92px;font-size:11.628px;line-height:11.628px;color:#262626;transform:scaleX(0.8163);">Bhopal ,</div>
<div class="t" style="left:256.06px;top:227.92px;font-size:11.628px;line-height:11.628px;color:#262626;transform:scaleX(0.8175);">Punjab,</div>
<div class="t" style="left:288.31px;top:227.92px;font-size:11.628px;line-height:11.628px;color:#262626;transform:scaleX(0.8247);">800001,</div>
<div class="t" style="left:322.97px;top:227.92px;font-size:11.628px;line-height:11.628px;color:#262626;transform:scaleX(0.8259);">22-07-1996,</div>
<div class="t" style="left:374.77px;top:227.92px;font-size:11.628px;line-height:11.628px;color:#262626;transform:scaleX(0.8233);">35,</div>
<div class="t" style="left:388.08px;top:227.92px;font-size:11.628px;line-height:11.628px;color:#262626;transform:scaleX(0.8251);">9390197939,</div>
<div class="t" style="left:444.10px;top:227.92px;font-size:11.628px;line-height:11.628px;color:#262626;transform:scaleX(1.0228);">it</div>
<div class="t" style="left:8.01px;top:244.03px;font-size:10.756px;line-height:10.756px;color:#555;transform:scaleX(0.8000);">3</div>
<div class="t" style="left:22.90px;top:243.29px;font-size:11.628px;line-height:11.628px;color:#262626;transform:scaleX(0.8026);">EMP1002,</div>
<div class="t" style="left:66.48px;top:243.29px;font-size:11.628px;line-height:11.628px;color:#262626;transform:scaleX(0.8745);">Monu,</div>
<div class="t" style="left:94.74px;top:243.29px;font-size:11.628px;line-height:11.628px;color:#262626;transform:scaleX(0.7948);">Jaideep</div>
<div class="t" style="left:129.50px;top:243.29px;font-size:11.628px;line-height:11.628px;color:#262626;transform:scaleX(0.8340);">Thakur,</div>
<div class="t" style="left:161.84px;top:243.29px;font-size:11.628px;line-height:11.628px;color:#262626;transform:scaleX(0.8256);">56</div>
<div class="t" style="left:174.90px;top:243.29px;font-size:11.628px;line-height:11.628px;color:#262626;transform:scaleX(0.8179);">Patel</div>
<div class="t" style="left:198.96px;top:243.29px;font-size:11.628px;line-height:11.628px;color:#262626;transform:scaleX(0.8385);">StreetStreet,</div>
<div class="t" style="left:253.70px;top:243.29px;font-size:11.628px;line-height:11.628px;color:#262626;transform:scaleX(0.8069);">Chennai,</div>
<div class="t" style="left:291.25px;top:243.29px;font-size:11.628px;line-height:11.628px;color:#262626;transform:scaleX(0.8944);">Uttar</div>
<div class="t" style="left:316.17px;top:243.29px;font-size:11.628px;line-height:11.628px;color:#262626;transform:scaleX(0.7998);">Pradesh,</div>
<div class="t" style="left:353.39px;top:243.29px;font-size:11.628px;line-height:11.628px;color:#262626;transform:scaleX(0.8247);">302001,</div>
<div class="t" style="left:388.06px;top:243.29px;font-size:11.628px;line-height:11.628px;color:#262626;transform:scaleX(0.8259);">05-08-1998,</div>
<div class="t" style="left:439.86px;top:243.29px;font-size:11.628px;line-height:11.628px;color:#262626;transform:scaleX(0.8233);">28,</div>
<div class="t" style="left:453.16px;top:243.29px;font-size:11.628px;line-height:11.628px;color:#262626;transform:scaleX(0.8357);">9411742917,</div>
<div class="t" style="left:509.19px;top:243.29px;font-size:11.628px;line-height:11.628px;color:#262626;transform:scaleX(0.7994);">Finance</div>
<div class="t" style="left:8.01px;top:259.40px;font-size:10.756px;line-height:10.756px;color:#555;transform:scaleX(0.8000);">4</div>
<div class="t" style="left:22.90px;top:258.66px;font-size:11.628px;line-height:11.628px;color:#262626;transform:scaleX(0.8026);">EMP1003,</div>
<div class="t" style="left:66.48px;top:258.66px;font-size:11.628px;line-height:11.628px;color:#262626;transform:scaleX(0.8049);">Harsh,</div>
<div class="t" style="left:94.05px;top:258.66px;font-size:11.628px;line-height:11.628px;color:#262626;transform:scaleX(0.8629);">Mohan</div>
<div class="t" style="left:127.11px;top:258.66px;font-size:11.628px;line-height:11.628px;color:#262626;transform:scaleX(0.8027);">Chauhan,</div>
<div class="t" style="left:167.59px;top:258.66px;font-size:11.628px;line-height:11.628px;color:#262626;transform:scaleX(0.8256);">44</div>
<div class="t" style="left:180.65px;top:258.66px;font-size:11.628px;line-height:11.628px;color:#262626;transform:scaleX(0.8533);">Temple</div>
<div class="t" style="left:215.01px;top:258.66px;font-size:11.628px;line-height:11.628px;color:#262626;transform:scaleX(0.7878);">RoadRoad,</div>
<div class="t" style="left:263.74px;top:258.66px;font-size:11.628px;line-height:11.628px;color:#262626;transform:scaleX(0.8024);">Pune,</div>
<div class="t" style="left:288.12px;top:258.66px;font-size:11.628px;line-height:11.628px;color:#262626;transform:scaleX(0.8944);">Uttar</div>
<div class="t" style="left:313.04px;top:258.66px;font-size:11.628px;line-height:11.628px;color:#262626;transform:scaleX(0.7998);">Pradesh,</div>
<div class="t" style="left:350.26px;top:258.66px;font-size:11.628px;line-height:11.628px;color:#262626;transform:scaleX(0.8247);">600020,</div>
<div class="t" style="left:384.93px;top:258.66px;font-size:11.628px;line-height:11.628px;color:#262626;transform:scaleX(0.8259);">20-07-1987,</div>
<div class="t" style="left:436.72px;top:258.66px;font-size:11.628px;line-height:11.628px;color:#262626;transform:scaleX(0.8233);">27,</div>
<div class="t" style="left:450.03px;top:258.66px;font-size:11.628px;line-height:11.628px;color:#262626;transform:scaleX(0.8251);">9001410108,</div>
<div class="t" style="left:506.05px;top:258.66px;font-size:11.628px;line-height:11.628px;color:#262626;transform:scaleX(0.7537);">IT</div>
<div class="t" style="left:8.01px;top:274.77px;font-size:10.756px;line-height:10.756px;color:#555;transform:scaleX(0.8000);">5</div>
<div class="t" style="left:22.90px;top:274.03px;font-size:11.628px;line-height:11.628px;color:#262626;transform:scaleX(0.8026);">EMP1004,</div>
<div class="t" style="left:66.48px;top:274.03px;font-size:11.628px;line-height:11.628px;color:#262626;transform:scaleX(0.8745);">Monu,</div>
<div class="t" style="left:94.74px;top:274.03px;font-size:11.628px;line-height:11.628px;color:#262626;transform:scaleX(0.7948);">Jaideep</div>
<div class="t" style="left:129.50px;top:274.03px;font-size:11.628px;line-height:11.628px;color:#262626;transform:scaleX(0.8340);">Thakur,</div>
<div class="t" style="left:161.84px;top:274.03px;font-size:11.628px;line-height:11.628px;color:#262626;transform:scaleX(0.8256);">9</div>
<div class="t" style="left:169.56px;top:274.03px;font-size:11.628px;line-height:11.628px;color:#262626;transform:scaleX(0.8191);">Gandhi</div>
<div class="t" style="left:202.66px;top:274.03px;font-size:11.628px;line-height:11.628px;color:#262626;transform:scaleX(0.8538);">MargMarg,</div>
<div class="t" style="left:250.66px;top:274.03px;font-size:11.628px;line-height:11.628px;color:#262626;transform:scaleX(0.8567);">Mumbai ,</div>
<div class="t" style="left:291.62px;top:274.03px;font-size:11.628px;line-height:11.628px;color:#262626;transform:scaleX(0.8944);">Uttar</div>
<div class="t" style="left:316.54px;top:274.03px;font-size:11.628px;line-height:11.628px;color:#262626;transform:scaleX(0.7998);">Pradesh,</div>
<div class="t" style="left:353.76px;top:274.03px;font-size:11.628px;line-height:11.628px;color:#262626;transform:scaleX(0.8247);">800001,</div>
<div class="t" style="left:388.43px;top:274.03px;font-size:11.628px;line-height:11.628px;color:#262626;transform:scaleX(0.8259);">16-03-1985,</div>
<div class="t" style="left:440.23px;top:274.03px;font-size:11.628px;line-height:11.628px;color:#262626;transform:scaleX(0.8233);">32,</div>
<div class="t" style="left:453.53px;top:274.03px;font-size:11.628px;line-height:11.628px;color:#262626;transform:scaleX(0.8251);">9190169014,</div>
<div class="t" style="left:511.94px;top:274.03px;font-size:11.628px;line-height:11.628px;color:#262626;transform:scaleX(0.7716);">sales</div>
<div class="t" style="left:8.01px;top:290.14px;font-size:10.756px;line-height:10.756px;color:#555;transform:scaleX(0.8000);">6</div>
<div class="t" style="left:22.90px;top:289.40px;font-size:11.628px;line-height:11.628px;color:#262626;transform:scaleX(0.8026);">EMP1005,</div>
<div class="t" style="left:66.48px;top:289.40px;font-size:11.628px;line-height:11.628px;color:#262626;transform:scaleX(0.8322);">Mahesh,</div>
<div class="t" style="left:103.59px;top:289.40px;font-size:11.628px;line-height:11.628px;color:#262626;transform:scaleX(0.8060);">Subham</div>
<div class="t" style="left:140.88px;top:289.40px;font-size:11.628px;line-height:11.628px;color:#262626;transform:scaleX(0.8353);">Kumar,</div>
<div class="t" style="left:171.66px;top:289.40px;font-size:11.628px;line-height:11.628px;color:#262626;transform:scaleX(0.8256);">56</div>
<div class="t" style="left:184.72px;top:289.40px;font-size:11.628px;line-height:11.628px;color:#262626;transform:scaleX(0.8179);">Patel</div>
<div class="t" style="left:208.77px;top:289.40px;font-size:11.628px;line-height:11.628px;color:#262626;transform:scaleX(0.8385);">StreetStreet,</div>
<div class="t" style="left:263.51px;top:289.40px;font-size:11.628px;line-height:11.628px;color:#262626;transform:scaleX(0.8069);">Chennai,</div>
<div class="t" style="left:301.07px;top:289.40px;font-size:11.628px;line-height:11.628px;color:#262626;transform:scaleX(0.8046);">Rajasthan,</div>
<div class="t" style="left:345.80px;top:289.40px;font-size:11.628px;line-height:11.628px;color:#262626;transform:scaleX(0.8247);">302001,</div>
<div class="t" style="left:380.46px;top:289.40px;font-size:11.628px;line-height:11.628px;color:#262626;transform:scaleX(0.8259);">09-08-1997,</div>
<div class="t" style="left:432.26px;top:289.40px;font-size:11.628px;line-height:11.628px;color:#262626;transform:scaleX(0.8233);">26,</div>
<div class="t" style="left:445.57px;top:289.40px;font-size:11.628px;line-height:11.628px;color:#262626;transform:scaleX(0.8251);">9255629718,</div>
<div class="t" style="left:501.59px;top:289.40px;font-size:11.628px;line-height:11.628px;color:#262626;transform:scaleX(0.7449);">Sales</div>
<div class="t" style="left:8.01px;top:305.51px;font-size:10.756px;line-height:10.756px;color:#555;transform:scaleX(0.8000);">7</div>
<div class="t" style="left:22.90px;top:304.77px;font-size:11.628px;line-height:11.628px;color:#262626;transform:scaleX(0.8026);">EMP1006,</div>
<div class="t" style="left:66.48px;top:304.77px;font-size:11.628px;line-height:11.628px;color:#262626;transform:scaleX(0.8208);">Dharmesh,</div>
<div class="t" style="left:113.16px;top:304.77px;font-size:11.628px;line-height:11.628px;color:#262626;transform:scaleX(0.8079);">Kapil</div>
<div class="t" style="left:136.43px;top:304.77px;font-size:11.628px;line-height:11.628px;color:#262626;transform:scaleX(0.8073);">Bhushan,</div>
<div class="t" style="left:176.09px;top:304.77px;font-size:11.628px;line-height:11.628px;color:#262626;transform:scaleX(0.8256);">24</div>
<div class="t" style="left:189.16px;top:304.77px;font-size:11.628px;line-height:11.628px;color:#262626;transform:scaleX(0.8457);">Nehru</div>
<div class="t" style="left:218.32px;top:304.77px;font-size:11.628px;line-height:11.628px;color:#262626;transform:scaleX(0.8141);">NagarNagar,</div>
<div class="t" style="left:272.00px;top:304.77px;font-size:11.628px;line-height:11.628px;color:#262626;transform:scaleX(0.8316);">Delhi,</div>
<div class="t" style="left:296.72px;top:304.77px;font-size:11.628px;line-height:11.628px;color:#262626;transform:scaleX(0.8944);">Uttar</div>
<div class="t" style="left:321.64px;top:304.77px;font-size:11.628px;line-height:11.628px;color:#262626;transform:scaleX(0.7998);">Pradesh,</div>
<div class="t" style="left:358.86px;top:304.77px;font-size:11.628px;line-height:11.628px;color:#262626;transform:scaleX(0.8420);">110065,</div>
<div class="t" style="left:393.53px;top:304.77px;font-size:11.628px;line-height:11.628px;color:#262626;transform:scaleX(0.8374);">23-11-1987,</div>
<div class="t" style="left:445.32px;top:304.77px;font-size:11.628px;line-height:11.628px;color:#262626;transform:scaleX(0.8233);">28,</div>
<div class="t" style="left:458.63px;top:304.77px;font-size:11.628px;line-height:11.628px;color:#262626;transform:scaleX(0.8251);">9469707276,</div>
<div class="t" style="left:517.04px;top:304.77px;font-size:11.628px;line-height:11.628px;color:#262626;transform:scaleX(0.7716);">sales</div>
<div class="t" style="left:8.01px;top:320.88px;font-size:10.756px;line-height:10.756px;color:#555;transform:scaleX(0.8000);">8</div>
<div class="t" style="left:22.90px;top:320.14px;font-size:11.628px;line-height:11.628px;color:#262626;transform:scaleX(0.8026);">EMP1007,</div>
<div class="t" style="left:66.48px;top:320.14px;font-size:11.628px;line-height:11.628px;color:#262626;transform:scaleX(0.7879);">Suresh,</div>
<div class="t" style="left:98.05px;top:320.14px;font-size:11.628px;line-height:11.628px;color:#262626;transform:scaleX(0.8079);">Kapil</div>
<div class="t" style="left:121.33px;top:320.14px;font-size:11.628px;line-height:11.628px;color:#262626;transform:scaleX(0.8043);">Tyagi,</div>
<div class="t" style="left:146.28px;top:320.14px;font-size:11.628px;line-height:11.628px;color:#262626;transform:scaleX(0.8256);">12</div>
<div class="t" style="left:159.34px;top:320.14px;font-size:11.628px;line-height:11.628px;color:#262626;transform:scaleX(0.7926);">Park</div>
<div class="t" style="left:180.67px;top:320.14px;font-size:11.628px;line-height:11.628px;color:#262626;transform:scaleX(0.8256);">AvenueAvenue,</div>
<div class="t" style="left:248.12px;top:320.14px;font-size:11.628px;line-height:11.628px;color:#262626;transform:scaleX(0.8316);">Delhi,</div>
<div class="t" style="left:272.84px;top:320.14px;font-size:11.628px;line-height:11.628px;color:#262626;transform:scaleX(0.8046);">Rajasthan,</div>
<div class="t" style="left:317.57px;top:320.14px;font-size:11.628px;line-height:11.628px;color:#262626;transform:scaleX(0.8247);">226010,</div>
<div class="t" style="left:352.23px;top:320.14px;font-size:11.628px;line-height:11.628px;color:#262626;transform:scaleX(0.8259);">21-12-1998,</div>
<div class="t" style="left:404.03px;top:320.14px;font-size:11.628px;line-height:11.628px;color:#262626;transform:scaleX(0.8233);">37,</div>
<div class="t" style="left:417.33px;top:320.14px;font-size:11.628px;line-height:11.628px;color:#262626;transform:scaleX(0.8251);">9104990899,</div>
<div class="t" style="left:473.36px;top:320.14px;font-size:11.628px;line-height:11.628px;color:#262626;transform:scaleX(0.7314);">HR</div>
<div class="t" style="left:8.01px;top:336.25px;font-size:10.756px;line-height:10.756px;color:#555;transform:scaleX(0.8000);">9</div>
<div class="t" style="left:22.90px;top:335.51px;font-size:11.628px;line-height:11.628px;color:#262626;transform:scaleX(0.8026);">EMP1008,</div>
<div class="t" style="left:66.48px;top:335.51px;font-size:11.628px;line-height:11.628px;color:#262626;transform:scaleX(0.7815);">Rajesh,</div>
<div class="t" style="left:97.29px;top:335.51px;font-size:11.628px;line-height:11.628px;color:#262626;transform:scaleX(0.8898);">Nitin</div>
<div class="t" style="left:120.37px;top:335.51px;font-size:11.628px;line-height:11.628px;color:#262626;transform:scaleX(0.8353);">Kumar,</div>
<div class="t" style="left:151.15px;top:335.51px;font-size:11.628px;line-height:11.628px;color:#262626;transform:scaleX(0.8256);">18</div>
<div class="t" style="left:164.21px;top:335.51px;font-size:11.628px;line-height:11.628px;color:#262626;transform:scaleX(0.7603);">Rose</div>
<div class="t" style="left:187.23px;top:335.51px;font-size:11.628px;line-height:11.628px;color:#262626;transform:scaleX(0.8230);">ColonyColony,</div>
<div class="t" style="left:248.75px;top:335.51px;font-size:11.628px;line-height:11.628px;color:#262626;transform:scaleX(0.8316);">Delhi,</div>
<div class="t" style="left:273.48px;top:335.51px;font-size:11.628px;line-height:11.628px;color:#262626;transform:scaleX(0.8418);">Bihar,</div>
<div class="t" style="left:298.51px;top:335.51px;font-size:11.628px;line-height:11.628px;color:#262626;transform:scaleX(0.8247);">143001,</div>
<div class="t" style="left:333.17px;top:335.51px;font-size:11.628px;line-height:11.628px;color:#262626;transform:scaleX(0.8259);">01-12-1996,</div>
<div class="t" style="left:384.97px;top:335.51px;font-size:11.628px;line-height:11.628px;color:#262626;transform:scaleX(0.8233);">34,</div>
<div class="t" style="left:398.28px;top:335.51px;font-size:11.628px;line-height:11.628px;color:#262626;transform:scaleX(0.8251);">9020781596,</div>
<div class="t" style="left:454.30px;top:335.51px;font-size:11.628px;line-height:11.628px;color:#262626;transform:scaleX(1.0228);">it</div>
<div class="t" style="left:5.61px;top:351.62px;font-size:10.756px;line-height:10.756px;color:#555;transform:scaleX(0.8000);">10</div>
<div class="t" style="left:22.90px;top:350.88px;font-size:11.628px;line-height:11.628px;color:#262626;transform:scaleX(0.8026);">EMP1009,</div>
<div class="t" style="left:66.48px;top:350.88px;font-size:11.628px;line-height:11.628px;color:#262626;transform:scaleX(0.7929);">Sonu,</div>
<div class="t" style="left:90.58px;top:350.88px;font-size:11.628px;line-height:11.628px;color:#262626;transform:scaleX(0.8060);">Subham</div>
<div class="t" style="left:127.86px;top:350.88px;font-size:11.628px;line-height:11.628px;color:#262626;transform:scaleX(0.8507);">Mishra,</div>
<div class="t" style="left:160.29px;top:350.88px;font-size:11.628px;line-height:11.628px;color:#262626;transform:scaleX(0.8256);">18</div>
<div class="t" style="left:173.35px;top:350.88px;font-size:11.628px;line-height:11.628px;color:#262626;transform:scaleX(0.7603);">Rose</div>
<div class="t" style="left:196.37px;top:350.88px;font-size:11.628px;line-height:11.628px;color:#262626;transform:scaleX(0.8230);">ColonyColony,</div>
<div class="t" style="left:257.90px;top:350.88px;font-size:11.628px;line-height:11.628px;color:#262626;transform:scaleX(0.8316);">Delhi,</div>
<div class="t" style="left:282.62px;top:350.88px;font-size:11.628px;line-height:11.628px;color:#262626;transform:scaleX(0.8175);">Punjab,</div>
<div class="t" style="left:314.87px;top:350.88px;font-size:11.628px;line-height:11.628px;color:#262626;transform:scaleX(0.8247);">143001,</div>
<div class="t" style="left:349.53px;top:350.88px;font-size:11.628px;line-height:11.628px;color:#262626;transform:scaleX(0.8259);">13-03-1987,</div>
<div class="t" style="left:401.33px;top:350.88px;font-size:11.628px;line-height:11.628px;color:#262626;transform:scaleX(0.8233);">29,</div>
<div class="t" style="left:414.63px;top:350.88px;font-size:11.628px;line-height:11.628px;color:#262626;transform:scaleX(0.8251);">9005987624,</div>
<div class="t" style="left:473.04px;top:350.88px;font-size:11.628px;line-height:11.628px;color:#262626;transform:scaleX(0.7716);">sales</div>
<div class="t" style="left:5.93px;top:366.99px;font-size:10.756px;line-height:10.756px;color:#555;transform:scaleX(0.8000);">11</div>
<div class="t" style="left:22.90px;top:366.25px;font-size:11.628px;line-height:11.628px;color:#262626;transform:scaleX(0.8026);">EMP1010,</div>
<div class="t" style="left:66.48px;top:366.25px;font-size:11.628px;line-height:11.628px;color:#262626;transform:scaleX(0.8208);">Dharmesh,</div>
<div class="t" style="left:113.16px;top:366.25px;font-size:11.628px;line-height:11.628px;color:#262626;transform:scaleX(0.8079);">Kapil</div>
<div class="t" style="left:136.43px;top:366.25px;font-size:11.628px;line-height:11.628px;color:#262626;transform:scaleX(0.8073);">Bhushan,</div>
<div class="t" style="left:176.09px;top:366.25px;font-size:11.628px;line-height:11.628px;color:#262626;transform:scaleX(0.8256);">102</div>
<div class="t" style="left:194.49px;top:366.25px;font-size:11.628px;line-height:11.628px;color:#262626;transform:scaleX(0.8357);">MG</div>
<div class="t" style="left:212.53px;top:366.25px;font-size:11.628px;line-height:11.628px;color:#262626;transform:scaleX(0.7878);">RoadRoad,</div>
<div class="t" style="left:261.25px;top:366.25px;font-size:11.628px;line-height:11.628px;color:#262626;transform:scaleX(0.8229);">Jaipur,</div>
<div class="t" style="left:289.45px;top:366.25px;font-size:11.628px;line-height:11.628px;color:#262626;transform:scaleX(0.8446);">Madhya</div>
<div class="t" style="left:326.77px;top:366.25px;font-size:11.628px;line-height:11.628px;color:#262626;transform:scaleX(0.7998);">Pradesh,</div>
<div class="t" style="left:363.99px;top:366.25px;font-size:11.628px;line-height:11.628px;color:#262626;transform:scaleX(0.8247);">400001,</div>
<div class="t" style="left:398.66px;top:366.25px;font-size:11.628px;line-height:11.628px;color:#262626;transform:scaleX(0.8374);">11-07-1987,</div>
<div class="t" style="left:450.45px;top:366.25px;font-size:11.628px;line-height:11.628px;color:#262626;transform:scaleX(0.8233);">36,</div>
<div class="t" style="left:463.76px;top:366.25px;font-size:11.628px;line-height:11.628px;color:#262626;transform:scaleX(0.8251);">9766866044,</div>
<div class="t" style="left:519.78px;top:366.25px;font-size:11.628px;line-height:11.628px;color:#262626;transform:scaleX(0.7537);">IT</div>
<div class="t" style="left:5.61px;top:382.36px;font-size:10.756px;line-height:10.756px;color:#555;transform:scaleX(0.8000);">12</div>
<div class="t" style="left:22.90px;top:381.62px;font-size:11.628px;line-height:11.628px;color:#262626;transform:scaleX(0.8156);">EMP1011,</div>
<div class="t" style="left:66.48px;top:381.62px;font-size:11.628px;line-height:11.628px;color:#262626;transform:scaleX(0.8049);">Harsh,</div>
<div class="t" style="left:94.05px;top:381.62px;font-size:11.628px;line-height:11.628px;color:#262626;transform:scaleX(0.8629);">Mohan</div>
<div class="t" style="left:127.11px;top:381.62px;font-size:11.628px;line-height:11.628px;color:#262626;transform:scaleX(0.8027);">Chauhan,</div>
<div class="t" style="left:167.59px;top:381.62px;font-size:11.628px;line-height:11.628px;color:#262626;transform:scaleX(0.8256);">24</div>
<div class="t" style="left:180.65px;top:381.62px;font-size:11.628px;line-height:11.628px;color:#262626;transform:scaleX(0.8457);">Nehru</div>
<div class="t" style="left:209.81px;top:381.62px;font-size:11.628px;line-height:11.628px;color:#262626;transform:scaleX(0.8141);">NagarNagar,</div>
<div class="t" style="left:265.87px;top:381.62px;font-size:11.628px;line-height:11.628px;color:#262626;transform:scaleX(0.8229);">Jaipur,</div>
<div class="t" style="left:294.07px;top:381.62px;font-size:11.628px;line-height:11.628px;color:#262626;transform:scaleX(0.8418);">Bihar,</div>
<div class="t" style="left:319.10px;top:381.62px;font-size:11.628px;line-height:11.628px;color:#262626;transform:scaleX(0.8420);">110065,</div>
<div class="t" style="left:353.76px;top:381.62px;font-size:11.628px;line-height:11.628px;color:#262626;transform:scaleX(0.8374);">20-11-1986,</div>
<div class="t" style="left:405.56px;top:381.62px;font-size:11.628px;line-height:11.628px;color:#262626;transform:scaleX(0.8233);">25,</div>
<div class="t" style="left:418.87px;top:381.62px;font-size:11.628px;line-height:11.628px;color:#262626;transform:scaleX(0.8251);">9001423723,</div>
<div class="t" style="left:474.89px;top:381.62px;font-size:11.628px;line-height:11.628px;color:#262626;transform:scaleX(0.7449);">Sales</div>
<div class="t" style="left:5.61px;top:397.73px;font-size:10.756px;line-height:10.756px;color:#555;transform:scaleX(0.8000);">13</div>
<div class="t" style="left:22.90px;top:396.99px;font-size:11.628px;line-height:11.628px;color:#262626;transform:scaleX(0.8026);">EMP1012,</div>
<div class="t" style="left:66.48px;top:396.99px;font-size:11.628px;line-height:11.628px;color:#262626;transform:scaleX(0.8049);">Harsh,</div>
<div class="t" style="left:94.05px;top:396.99px;font-size:11.628px;line-height:11.628px;color:#262626;transform:scaleX(0.8629);">Mohan</div>
<div class="t" style="left:127.11px;top:396.99px;font-size:11.628px;line-height:11.628px;color:#262626;transform:scaleX(0.8027);">Chauhan,</div>
<div class="t" style="left:167.59px;top:396.99px;font-size:11.628px;line-height:11.628px;color:#262626;transform:scaleX(0.8256);">12</div>
<div class="t" style="left:180.65px;top:396.99px;font-size:11.628px;line-height:11.628px;color:#262626;transform:scaleX(0.7926);">Park</div>
<div class="t" style="left:201.98px;top:396.99px;font-size:11.628px;line-height:11.628px;color:#262626;transform:scaleX(0.8256);">AvenueAvenue,</div>
<div class="t" style="left:269.42px;top:396.99px;font-size:11.628px;line-height:11.628px;color:#262626;transform:scaleX(0.8163);">Bhopal ,</div>
<div class="t" style="left:304.25px;top:396.99px;font-size:11.628px;line-height:11.628px;color:#262626;transform:scaleX(0.8175);">Punjab,</div>
<div class="t" style="left:336.50px;top:396.99px;font-size:11.628px;line-height:11.628px;color:#262626;transform:scaleX(0.8247);">226010,</div>
<div class="t" style="left:371.16px;top:396.99px;font-size:11.628px;line-height:11.628px;color:#262626;transform:scaleX(0.8259);">18-12-1998,</div>
<div class="t" style="left:422.96px;top:396.99px;font-size:11.628px;line-height:11.628px;color:#262626;transform:scaleX(0.8233);">30,</div>
<div class="t" style="left:436.27px;top:396.99px;font-size:11.628px;line-height:11.628px;color:#262626;transform:scaleX(0.8251);">9088995141,</div>
<div class="t" style="left:492.29px;top:396.99px;font-size:11.628px;line-height:11.628px;color:#262626;transform:scaleX(0.7537);">IT</div>
<div class="t" style="left:5.61px;top:413.10px;font-size:10.756px;line-height:10.756px;color:#555;transform:scaleX(0.8000);">14</div>
<div class="t" style="left:22.90px;top:412.36px;font-size:11.628px;line-height:11.628px;color:#262626;transform:scaleX(0.8026);">EMP1013,</div>
<div class="t" style="left:66.48px;top:412.36px;font-size:11.628px;line-height:11.628px;color:#262626;transform:scaleX(0.8745);">Monu,</div>
<div class="t" style="left:94.74px;top:412.36px;font-size:11.628px;line-height:11.628px;color:#262626;transform:scaleX(0.7948);">Jaideep</div>
<div class="t" style="left:129.50px;top:412.36px;font-size:11.628px;line-height:11.628px;color:#262626;transform:scaleX(0.8340);">Thakur,</div>
<div class="t" style="left:161.84px;top:412.36px;font-size:11.628px;line-height:11.628px;color:#262626;transform:scaleX(0.8256);">33</div>
<div class="t" style="left:174.90px;top:412.36px;font-size:11.628px;line-height:11.628px;color:#262626;transform:scaleX(0.8149);">Green</div>
<div class="t" style="left:203.62px;top:412.36px;font-size:11.628px;line-height:11.628px;color:#262626;transform:scaleX(0.7939);">ParkPark,</div>
<div class="t" style="left:246.53px;top:412.36px;font-size:11.628px;line-height:11.628px;color:#262626;transform:scaleX(0.8229);">Jaipur,</div>
<div class="t" style="left:274.73px;top:412.36px;font-size:11.628px;line-height:11.628px;color:#262626;transform:scaleX(0.8175);">Punjab,</div>
<div class="t" style="left:306.97px;top:412.36px;font-size:11.628px;line-height:11.628px;color:#262626;transform:scaleX(0.8247);">208002,</div>
<div class="t" style="left:341.64px;top:412.36px;font-size:11.628px;line-height:11.628px;color:#262626;transform:scaleX(0.8259);">20-03-1987,</div>
<div class="t" style="left:393.43px;top:412.36px;font-size:11.628px;line-height:11.628px;color:#262626;transform:scaleX(0.8233);">35,</div>
<div class="t" style="left:406.74px;top:412.36px;font-size:11.628px;line-height:11.628px;color:#262626;transform:scaleX(0.8251);">9513075585,</div>
<div class="t" style="left:462.76px;top:412.36px;font-size:11.628px;line-height:11.628px;color:#262626;transform:scaleX(1.0228);">it</div>
<div class="t" style="left:5.61px;top:428.47px;font-size:10.756px;line-height:10.756px;color:#555;transform:scaleX(0.8000);">15</div>
<div class="t" style="left:22.90px;top:427.73px;font-size:11.628px;line-height:11.628px;color:#262626;transform:scaleX(0.8026);">EMP1014,</div>
<div class="t" style="left:66.48px;top:427.73px;font-size:11.628px;line-height:11.628px;color:#262626;transform:scaleX(0.8322);">Mahesh,</div>
<div class="t" style="left:103.59px;top:427.73px;font-size:11.628px;line-height:11.628px;color:#262626;transform:scaleX(0.8060);">Subham</div>
<div class="t" style="left:140.88px;top:427.73px;font-size:11.628px;line-height:11.628px;color:#262626;transform:scaleX(0.8353);">Kumar,</div>
<div class="t" style="left:171.66px;top:427.73px;font-size:11.628px;line-height:11.628px;color:#262626;transform:scaleX(0.8256);">78</div>
<div class="t" style="left:184.72px;top:427.73px;font-size:11.628px;line-height:11.628px;color:#262626;transform:scaleX(0.7736);">Lake</div>
<div class="t" style="left:206.60px;top:427.73px;font-size:11.628px;line-height:11.628px;color:#262626;transform:scaleX(0.8552);">ViewView,</div>
<div class="t" style="left:251.57px;top:427.73px;font-size:11.628px;line-height:11.628px;color:#262626;transform:scaleX(0.8163);">Bhopal ,</div>
<div class="t" style="left:286.40px;top:427.73px;font-size:11.628px;line-height:11.628px;color:#262626;transform:scaleX(0.8175);">Punjab,</div>
<div class="t" style="left:318.64px;top:427.73px;font-size:11.628px;line-height:11.628px;color:#262626;transform:scaleX(0.8247);">462002,</div>
<div class="t" style="left:353.31px;top:427.73px;font-size:11.628px;line-height:11.628px;color:#262626;transform:scaleX(0.8259);">13-03-1991,</div>
<div class="t" style="left:405.10px;top:427.73px;font-size:11.628px;line-height:11.628px;color:#262626;transform:scaleX(0.8233);">37,</div>
<div class="t" style="left:418.41px;top:427.73px;font-size:11.628px;line-height:11.628px;color:#262626;transform:scaleX(0.8251);">9487715650,</div>
<div class="t" style="left:474.43px;top:427.73px;font-size:11.628px;line-height:11.628px;color:#262626;transform:scaleX(0.7537);">IT</div>
<div class="t" style="left:5.61px;top:443.84px;font-size:10.756px;line-height:10.756px;color:#555;transform:scaleX(0.8000);">16</div>
<div class="t" style="left:22.90px;top:443.10px;font-size:11.628px;line-height:11.628px;color:#262626;transform:scaleX(0.8026);">EMP1015,</div>
<div class="t" style="left:66.48px;top:443.10px;font-size:11.628px;line-height:11.628px;color:#262626;transform:scaleX(0.7879);">Suresh,</div>
<div class="t" style="left:98.05px;top:443.10px;font-size:11.628px;line-height:11.628px;color:#262626;transform:scaleX(0.8079);">Kapil</div>
<div class="t" style="left:121.33px;top:443.10px;font-size:11.628px;line-height:11.628px;color:#262626;transform:scaleX(0.8043);">Tyagi,</div>
<div class="t" style="left:146.28px;top:443.10px;font-size:11.628px;line-height:11.628px;color:#262626;transform:scaleX(0.8256);">33</div>
<div class="t" style="left:159.34px;top:443.10px;font-size:11.628px;line-height:11.628px;color:#262626;transform:scaleX(0.8149);">Green</div>
<div class="t" style="left:188.06px;top:443.10px;font-size:11.628px;line-height:11.628px;color:#262626;transform:scaleX(0.7939);">ParkPark,</div>
<div class="t" style="left:228.59px;top:443.10px;font-size:11.628px;line-height:11.628px;color:#262626;transform:scaleX(0.8316);">Delhi,</div>
<div class="t" style="left:253.31px;top:443.10px;font-size:11.628px;line-height:11.628px;color:#262626;transform:scaleX(0.8449);">Maharashtra,</div>
<div class="t" style="left:311.20px;top:443.10px;font-size:11.628px;line-height:11.628px;color:#262626;transform:scaleX(0.8247);">208002,</div>
<div class="t" style="left:345.86px;top:443.10px;font-size:11.628px;line-height:11.628px;color:#262626;transform:scaleX(0.8374);">18-11-1998,</div>
<div class="t" style="left:397.66px;top:443.10px;font-size:11.628px;line-height:11.628px;color:#262626;transform:scaleX(0.8233);">30,</div>
<div class="t" style="left:410.97px;top:443.10px;font-size:11.628px;line-height:11.628px;color:#262626;transform:scaleX(0.8251);">9828865020,</div>
<div class="t" style="left:466.99px;top:443.10px;font-size:11.628px;line-height:11.628px;color:#262626;transform:scaleX(0.7449);">Sales</div>
<div class="t" style="left:5.61px;top:459.21px;font-size:10.756px;line-height:10.756px;color:#555;transform:scaleX(0.8000);">17</div>
<div class="t" style="left:22.90px;top:458.47px;font-size:11.628px;line-height:11.628px;color:#262626;transform:scaleX(0.8026);">EMP1016,</div>
<div class="t" style="left:66.48px;top:458.47px;font-size:11.628px;line-height:11.628px;color:#262626;transform:scaleX(0.7815);">Rajesh,</div>
<div class="t" style="left:97.29px;top:458.47px;font-size:11.628px;line-height:11.628px;color:#262626;transform:scaleX(0.8898);">Nitin</div>
<div class="t" style="left:120.37px;top:458.47px;font-size:11.628px;line-height:11.628px;color:#262626;transform:scaleX(0.8353);">Kumar,</div>
<div class="t" style="left:151.15px;top:458.47px;font-size:11.628px;line-height:11.628px;color:#262626;transform:scaleX(0.8256);">65</div>
<div class="t" style="left:164.21px;top:458.47px;font-size:11.628px;line-height:11.628px;color:#262626;transform:scaleX(0.7927);">Residency</div>
<div class="t" style="left:209.62px;top:458.47px;font-size:11.628px;line-height:11.628px;color:#262626;transform:scaleX(0.8164);">AreaArea,</div>
<div class="t" style="left:252.37px;top:458.47px;font-size:11.628px;line-height:11.628px;color:#262626;transform:scaleX(0.8069);">Chennai,</div>
<div class="t" style="left:289.92px;top:458.47px;font-size:11.628px;line-height:11.628px;color:#262626;transform:scaleX(0.8175);">Punjab,</div>
<div class="t" style="left:322.16px;top:458.47px;font-size:11.628px;line-height:11.628px;color:#262626;transform:scaleX(0.8247);">452001,</div>
<div class="t" style="left:356.83px;top:458.47px;font-size:11.628px;line-height:11.628px;color:#262626;transform:scaleX(0.8259);">13-12-1997,</div>
<div class="t" style="left:408.63px;top:458.47px;font-size:11.628px;line-height:11.628px;color:#262626;transform:scaleX(0.8233);">38,</div>
<div class="t" style="left:421.93px;top:458.47px;font-size:11.628px;line-height:11.628px;color:#262626;transform:scaleX(0.8251);">9702737736,</div>
<div class="t" style="left:477.96px;top:458.47px;font-size:11.628px;line-height:11.628px;color:#262626;transform:scaleX(0.7994);">Finance</div>
<div class="t" style="left:5.61px;top:474.58px;font-size:10.756px;line-height:10.756px;color:#555;transform:scaleX(0.8000);">18</div>
<div class="t" style="left:22.90px;top:473.84px;font-size:11.628px;line-height:11.628px;color:#262626;transform:scaleX(0.8026);">EMP1017,</div>
<div class="t" style="left:66.48px;top:473.84px;font-size:11.628px;line-height:11.628px;color:#262626;transform:scaleX(0.8806);">Nitin,</div>
<div class="t" style="left:89.81px;top:473.84px;font-size:11.628px;line-height:11.628px;color:#262626;transform:scaleX(0.7281);">Jai</div>
<div class="t" style="left:103.01px;top:473.84px;font-size:11.628px;line-height:11.628px;color:#262626;transform:scaleX(0.8271);">Kishor,</div>
<div class="t" style="left:132.42px;top:473.84px;font-size:11.628px;line-height:11.628px;color:#262626;transform:scaleX(0.8256);">9</div>
<div class="t" style="left:140.14px;top:473.84px;font-size:11.628px;line-height:11.628px;color:#262626;transform:scaleX(0.8191);">Gandhi</div>
<div class="t" style="left:173.23px;top:473.84px;font-size:11.628px;line-height:11.628px;color:#262626;transform:scaleX(0.8538);">MargMarg,</div>
<div class="t" style="left:221.23px;top:473.84px;font-size:11.628px;line-height:11.628px;color:#262626;transform:scaleX(0.8316);">Delhi,</div>
<div class="t" style="left:245.96px;top:473.84px;font-size:11.628px;line-height:11.628px;color:#262626;transform:scaleX(0.8418);">Bihar,</div>
<div class="t" style="left:270.99px;top:473.84px;font-size:11.628px;line-height:11.628px;color:#262626;transform:scaleX(0.8247);">800001,</div>
<div class="t" style="left:305.65px;top:473.84px;font-size:11.628px;line-height:11.628px;color:#262626;transform:scaleX(0.8259);">20-08-1987,</div>
<div class="t" style="left:357.45px;top:473.84px;font-size:11.628px;line-height:11.628px;color:#262626;transform:scaleX(0.8233);">38,</div>
<div class="t" style="left:370.76px;top:473.84px;font-size:11.628px;line-height:11.628px;color:#262626;transform:scaleX(0.8251);">9685036460,</div>
<div class="t" style="left:426.78px;top:473.84px;font-size:11.628px;line-height:11.628px;color:#262626;transform:scaleX(0.7449);">Sales</div>
<div class="t" style="left:5.61px;top:489.95px;font-size:10.756px;line-height:10.756px;color:#555;transform:scaleX(0.8000);">19</div>
<div class="t" style="left:22.90px;top:489.21px;font-size:11.628px;line-height:11.628px;color:#262626;transform:scaleX(0.8026);">EMP1018,</div>
<div class="t" style="left:66.48px;top:489.21px;font-size:11.628px;line-height:11.628px;color:#262626;transform:scaleX(0.8357);">Rohit,</div>
<div class="t" style="left:91.87px;top:489.21px;font-size:11.628px;line-height:11.628px;color:#262626;transform:scaleX(0.7807);">Sanjay</div>
<div class="t" style="left:122.01px;top:489.21px;font-size:11.628px;line-height:11.628px;color:#262626;transform:scaleX(0.8006);">Sharma,</div>
<div class="t" style="left:157.19px;top:489.21px;font-size:11.628px;line-height:11.628px;color:#262626;transform:scaleX(0.8256);">44</div>
<div class="t" style="left:170.25px;top:489.21px;font-size:11.628px;line-height:11.628px;color:#262626;transform:scaleX(0.8533);">Temple</div>
<div class="t" style="left:204.62px;top:489.21px;font-size:11.628px;line-height:11.628px;color:#262626;transform:scaleX(0.7878);">RoadRoad,</div>
<div class="t" style="left:250.96px;top:489.21px;font-size:11.628px;line-height:11.628px;color:#262626;transform:scaleX(0.8163);">Bhopal ,</div>
<div class="t" style="left:285.79px;top:489.21px;font-size:11.628px;line-height:11.628px;color:#262626;transform:scaleX(0.8175);">Punjab,</div>
<div class="t" style="left:318.03px;top:489.21px;font-size:11.628px;line-height:11.628px;color:#262626;transform:scaleX(0.8247);">600020,</div>
<div class="t" style="left:352.70px;top:489.21px;font-size:11.628px;line-height:11.628px;color:#262626;transform:scaleX(0.8259);">14-07-1987,</div>
<div class="t" style="left:404.50px;top:489.21px;font-size:11.628px;line-height:11.628px;color:#262626;transform:scaleX(0.8233);">30,</div>
<div class="t" style="left:417.80px;top:489.21px;font-size:11.628px;line-height:11.628px;color:#262626;transform:scaleX(0.8251);">9682460177,</div>
<div class="t" style="left:473.83px;top:489.21px;font-size:11.628px;line-height:11.628px;color:#262626;transform:scaleX(0.7449);">Sales</div>
<div class="t" style="left:5.61px;top:505.32px;font-size:10.756px;line-height:10.756px;color:#555;transform:scaleX(0.8000);">20</div>
<div class="t" style="left:22.90px;top:504.58px;font-size:11.628px;line-height:11.628px;color:#262626;transform:scaleX(0.8026);">EMP1019,</div>
<div class="t" style="left:66.48px;top:504.58px;font-size:11.628px;line-height:11.628px;color:#262626;transform:scaleX(0.8716);">Amit,</div>
<div class="t" style="left:89.57px;top:504.58px;font-size:11.628px;line-height:11.628px;color:#262626;transform:scaleX(0.7724);">Rakesh</div>
<div class="t" style="left:122.40px;top:504.58px;font-size:11.628px;line-height:11.628px;color:#262626;transform:scaleX(0.8410);">Verma,</div>
<div class="t" style="left:153.38px;top:504.58px;font-size:11.628px;line-height:11.628px;color:#262626;transform:scaleX(0.8256);">18</div>
<div class="t" style="left:166.44px;top:504.58px;font-size:11.628px;line-height:11.628px;color:#262626;transform:scaleX(0.7603);">Rose</div>
<div class="t" style="left:189.46px;top:504.58px;font-size:11.628px;line-height:11.628px;color:#262626;transform:scaleX(0.8230);">ColonyColony,</div>
<div class="t" style="left:250.99px;top:504.58px;font-size:11.628px;line-height:11.628px;color:#262626;transform:scaleX(0.8316);">Delhi,</div>
<div class="t" style="left:275.71px;top:504.58px;font-size:11.628px;line-height:11.628px;color:#262626;transform:scaleX(0.8449);">Maharashtra,</div>
<div class="t" style="left:333.60px;top:504.58px;font-size:11.628px;line-height:11.628px;color:#262626;transform:scaleX(0.8247);">143001,</div>
<div class="t" style="left:368.27px;top:504.58px;font-size:11.628px;line-height:11.628px;color:#262626;transform:scaleX(0.8374);">20-11-1987,</div>
<div class="t" style="left:420.06px;top:504.58px;font-size:11.628px;line-height:11.628px;color:#262626;transform:scaleX(0.8233);">31,</div>
<div class="t" style="left:433.37px;top:504.58px;font-size:11.628px;line-height:11.628px;color:#262626;transform:scaleX(0.8251);">9125189487,</div>
<div class="t" style="left:489.39px;top:504.58px;font-size:11.628px;line-height:11.628px;color:#262626;transform:scaleX(0.7449);">Sales</div>
<div class="t" style="left:5.61px;top:520.69px;font-size:10.756px;line-height:10.756px;color:#555;transform:scaleX(0.8000);">21</div>
<div class="t" style="left:22.90px;top:519.95px;font-size:11.628px;line-height:11.628px;color:#262626;transform:scaleX(0.8026);">EMP1020,</div>
<div class="t" style="left:66.48px;top:519.95px;font-size:11.628px;line-height:11.628px;color:#262626;transform:scaleX(0.8322);">Mahesh,</div>
<div class="t" style="left:103.59px;top:519.95px;font-size:11.628px;line-height:11.628px;color:#262626;transform:scaleX(0.8060);">Subham</div>
<div class="t" style="left:140.88px;top:519.95px;font-size:11.628px;line-height:11.628px;color:#262626;transform:scaleX(0.8353);">Kumar,</div>
<div class="t" style="left:171.66px;top:519.95px;font-size:11.628px;line-height:11.628px;color:#262626;transform:scaleX(0.8256);">56</div>
<div class="t" style="left:184.72px;top:519.95px;font-size:11.628px;line-height:11.628px;color:#262626;transform:scaleX(0.8179);">Patel</div>
<div class="t" style="left:208.77px;top:519.95px;font-size:11.628px;line-height:11.628px;color:#262626;transform:scaleX(0.8385);">StreetStreet,</div>
<div class="t" style="left:263.51px;top:519.95px;font-size:11.628px;line-height:11.628px;color:#262626;transform:scaleX(0.8316);">Delhi,</div>
<div class="t" style="left:288.23px;top:519.95px;font-size:11.628px;line-height:11.628px;color:#262626;transform:scaleX(0.8175);">Punjab,</div>
<div class="t" style="left:320.48px;top:519.95px;font-size:11.628px;line-height:11.628px;color:#262626;transform:scaleX(0.8247);">302001,</div>
<div class="t" style="left:355.14px;top:519.95px;font-size:11.628px;line-height:11.628px;color:#262626;transform:scaleX(0.8259);">19-10-1991,</div>
<div class="t" style="left:406.94px;top:519.95px;font-size:11.628px;line-height:11.628px;color:#262626;transform:scaleX(0.8233);">25,</div>
<div class="t" style="left:420.25px;top:519.95px;font-size:11.628px;line-height:11.628px;color:#262626;transform:scaleX(0.8251);">9572724164,</div>
<div class="t" style="left:476.27px;top:519.95px;font-size:11.628px;line-height:11.628px;color:#262626;transform:scaleX(1.0228);">it</div>
<div class="t" style="left:5.61px;top:536.06px;font-size:10.756px;line-height:10.756px;color:#555;transform:scaleX(0.8000);">22</div>
<div class="t" style="left:22.90px;top:535.32px;font-size:11.628px;line-height:11.628px;color:#262626;transform:scaleX(0.8026);">EMP1021,</div>
<div class="t" style="left:66.48px;top:535.32px;font-size:11.628px;line-height:11.628px;color:#262626;transform:scaleX(0.8322);">Mahesh,</div>
<div class="t" style="left:103.59px;top:535.32px;font-size:11.628px;line-height:11.628px;color:#262626;transform:scaleX(0.8060);">Subham</div>
<div class="t" style="left:140.88px;top:535.32px;font-size:11.628px;line-height:11.628px;color:#262626;transform:scaleX(0.8353);">Kumar,</div>
<div class="t" style="left:171.66px;top:535.32px;font-size:11.628px;line-height:11.628px;color:#262626;transform:scaleX(0.8256);">56</div>
<div class="t" style="left:184.72px;top:535.32px;font-size:11.628px;line-height:11.628px;color:#262626;transform:scaleX(0.8179);">Patel</div>
<div class="t" style="left:208.77px;top:535.32px;font-size:11.628px;line-height:11.628px;color:#262626;transform:scaleX(0.8385);">StreetStreet,</div>
<div class="t" style="left:263.51px;top:535.32px;font-size:11.628px;line-height:11.628px;color:#262626;transform:scaleX(0.8069);">Chennai,</div>
<div class="t" style="left:301.07px;top:535.32px;font-size:11.628px;line-height:11.628px;color:#262626;transform:scaleX(0.8449);">Maharashtra,</div>
<div class="t" style="left:358.96px;top:535.32px;font-size:11.628px;line-height:11.628px;color:#262626;transform:scaleX(0.8247);">302001,</div>
<div class="t" style="left:393.62px;top:535.32px;font-size:11.628px;line-height:11.628px;color:#262626;transform:scaleX(0.8259);">23-02-1992,</div>
<div class="t" style="left:445.42px;top:535.32px;font-size:11.628px;line-height:11.628px;color:#262626;transform:scaleX(0.8233);">40,</div>
<div class="t" style="left:458.72px;top:535.32px;font-size:11.628px;line-height:11.628px;color:#262626;transform:scaleX(0.8251);">9822451293,</div>
<div class="t" style="left:514.75px;top:535.32px;font-size:11.628px;line-height:11.628px;color:#262626;transform:scaleX(1.0228);">it</div>
<div class="t" style="left:5.61px;top:551.43px;font-size:10.756px;line-height:10.756px;color:#555;transform:scaleX(0.8000);">23</div>
<div class="t" style="left:22.90px;top:550.69px;font-size:11.628px;line-height:11.628px;color:#262626;transform:scaleX(0.8026);">EMP1022,</div>
<div class="t" style="left:66.48px;top:550.69px;font-size:11.628px;line-height:11.628px;color:#262626;transform:scaleX(0.8716);">Amit,</div>
<div class="t" style="left:89.57px;top:550.69px;font-size:11.628px;line-height:11.628px;color:#262626;transform:scaleX(0.7724);">Rakesh</div>
<div class="t" style="left:122.40px;top:550.69px;font-size:11.628px;line-height:11.628px;color:#262626;transform:scaleX(0.8410);">Verma,</div>
<div class="t" style="left:153.38px;top:550.69px;font-size:11.628px;line-height:11.628px;color:#262626;transform:scaleX(0.8256);">18</div>
<div class="t" style="left:166.44px;top:550.69px;font-size:11.628px;line-height:11.628px;color:#262626;transform:scaleX(0.7603);">Rose</div>
<div class="t" style="left:189.46px;top:550.69px;font-size:11.628px;line-height:11.628px;color:#262626;transform:scaleX(0.8230);">ColonyColony,</div>
<div class="t" style="left:250.99px;top:550.69px;font-size:11.628px;line-height:11.628px;color:#262626;transform:scaleX(0.8567);">Mumbai ,</div>
<div class="t" style="left:291.96px;top:550.69px;font-size:11.628px;line-height:11.628px;color:#262626;transform:scaleX(0.8046);">Rajasthan,</div>
<div class="t" style="left:336.69px;top:550.69px;font-size:11.628px;line-height:11.628px;color:#262626;transform:scaleX(0.8247);">143001,</div>
<div class="t" style="left:371.35px;top:550.69px;font-size:11.628px;line-height:11.628px;color:#262626;transform:scaleX(0.8374);">26-11-1997,</div>
<div class="t" style="left:423.15px;top:550.69px;font-size:11.628px;line-height:11.628px;color:#262626;transform:scaleX(0.8233);">26,</div>
<div class="t" style="left:436.46px;top:550.69px;font-size:11.628px;line-height:11.628px;color:#262626;transform:scaleX(0.8251);">9288650302,</div>
<div class="t" style="left:492.48px;top:550.69px;font-size:11.628px;line-height:11.628px;color:#262626;transform:scaleX(1.0228);">it</div>
<div class="t" style="left:5.61px;top:566.80px;font-size:10.756px;line-height:10.756px;color:#555;transform:scaleX(0.8000);">24</div>
<div class="t" style="left:22.90px;top:566.06px;font-size:11.628px;line-height:11.628px;color:#262626;transform:scaleX(0.8026);">EMP1023,</div>
<div class="t" style="left:66.48px;top:566.06px;font-size:11.628px;line-height:11.628px;color:#262626;transform:scaleX(0.7879);">Suresh,</div>
<div class="t" style="left:98.05px;top:566.06px;font-size:11.628px;line-height:11.628px;color:#262626;transform:scaleX(0.8079);">Kapil</div>
<div class="t" style="left:121.33px;top:566.06px;font-size:11.628px;line-height:11.628px;color:#262626;transform:scaleX(0.8043);">Tyagi,</div>
<div class="t" style="left:146.28px;top:566.06px;font-size:11.628px;line-height:11.628px;color:#262626;transform:scaleX(0.8256);">102</div>
<div class="t" style="left:164.68px;top:566.06px;font-size:11.628px;line-height:11.628px;color:#262626;transform:scaleX(0.8357);">MG</div>
<div class="t" style="left:182.72px;top:566.06px;font-size:11.628px;line-height:11.628px;color:#262626;transform:scaleX(0.7878);">RoadRoad,</div>
<div class="t" style="left:229.06px;top:566.06px;font-size:11.628px;line-height:11.628px;color:#262626;transform:scaleX(0.8316);">Delhi,</div>
<div class="t" style="left:253.78px;top:566.06px;font-size:11.628px;line-height:11.628px;color:#262626;transform:scaleX(0.8418);">Bihar,</div>
<div class="t" style="left:278.81px;top:566.06px;font-size:11.628px;line-height:11.628px;color:#262626;transform:scaleX(0.8247);">400001,</div>
<div class="t" style="left:313.48px;top:566.06px;font-size:11.628px;line-height:11.628px;color:#262626;transform:scaleX(0.8374);">11-02-1993,</div>
<div class="t" style="left:365.27px;top:566.06px;font-size:11.628px;line-height:11.628px;color:#262626;transform:scaleX(0.8233);">30,</div>
<div class="t" style="left:378.58px;top:566.06px;font-size:11.628px;line-height:11.628px;color:#262626;transform:scaleX(0.8251);">9628532256,</div>
<div class="t" style="left:436.99px;top:566.06px;font-size:11.628px;line-height:11.628px;color:#262626;transform:scaleX(0.7716);">sales</div>
<div class="t" style="left:5.61px;top:582.17px;font-size:10.756px;line-height:10.756px;color:#555;transform:scaleX(0.8000);">25</div>
</div>
<div class="clip" style="left:555px;top:0;width:645px;height:581px;">
<div style="position:absolute;left:-555px;top:0;width:1200px;height:581px;">
<div class="r" style="left:555.00px;top:72.00px;width:645.00px;height:509.00px;background:#e8e9df;"></div>
<div class="r" style="left:558.00px;top:72.00px;width:638.50px;height:86.80px;background:#fff;border-radius:0 0 0 6px;box-shadow:0 1px 1.5px rgba(0,0,0,0.13);"></div>
<svg width="1200" height="581" viewBox="0 0 1200 581">

<defs>
<g id="r-getdata" fill="none" stroke="#5b5b5b" stroke-width="1.3">
  <path d="M0.65 3.3 V21.6 C0.65 23.6 4 24.9 8.3 24.9" fill="#f7f7f7"/>
  <path d="M0.65 3.3 H15.5 V12" fill="#f7f7f7" stroke="none"/>
  <rect x="0.65" y="3.3" width="14.8" height="9" fill="#f7f7f7" stroke="none"/>
  <path d="M0.65 3.3 V21.6 M15.45 3.3 V12"/>
  <ellipse cx="8.05" cy="3.3" rx="7.4" ry="2.65" fill="#fff"/>
  <rect x="9.1" y="12.6" width="11.1" height="13.1" rx="0.8" fill="#fff"/>
  <rect x="9.1" y="12.6" width="11.1" height="3" fill="#5b5b5b" stroke="none"/>
  <path d="M9.1 19.1 H20.2 M9.1 22.4 H20.2 M12.8 15.6 V25.7 M16.5 15.6 V25.7" stroke-width="1.1"/>
</g>
<g id="r-textcsv" fill="none" stroke="#5b5b5b" stroke-width="1.3">
  <path d="M9.6 24.6 H0.65 V0.65 H9.4 L15.5 7.9 V10.4" fill="#f7f7f7"/>
  <path d="M9.4 0.65 V7.9 H15.5"/>
  <rect x="10.3" y="10.9" width="9.6" height="14.8" rx="0.8" fill="#fff"/>
  <path d="M12.6 14.4 H17.6 M12.6 17.2 H17.6 M12.6 20 H17.6 M12.6 22.8 H17.6" stroke-width="1"/>
</g>
<g id="r-web" fill="none" stroke="#5b5b5b" stroke-width="1.3">
  <path d="M9.2 24.6 H0.65 V0.65 H9.4 L15.2 7.2 V13.6" fill="#f7f7f7"/>
  <path d="M9.4 0.65 V7.2 H15.2"/>
  <circle cx="14.95" cy="19.6" r="6.1" fill="#2b8ad8" stroke="none"/>
  <path d="M8.9 19.6 H21 M9.9 16.4 H20 M9.9 22.8 H20 M14.95 13.5 V25.7" stroke="#fff" stroke-width="0.7"/>
  <ellipse cx="14.95" cy="19.6" rx="3.1" ry="6.1" stroke="#fff" stroke-width="0.7"/>
</g>
<g id="r-table" fill="none" stroke="#5b5b5b" stroke-width="1.4">
  <rect x="0.7" y="0.7" width="20" height="23.2" rx="1" fill="#fff"/>
  <path d="M0.7 5.3 H20.7 M0.7 11.5 H20.7 M0.7 17.8 H20.7 M7.1 5.3 V23.9 M14.1 5.3 V23.9" stroke-width="1.0"/>
  <path d="M1.7 1.9 H6.5 L4.1 4.7 Z M8.2 1.9 H13 L10.6 4.7 Z M14.9 1.9 H19.7 L17.3 4.7 Z" fill="#2b8ad8" stroke="none"/>
</g>
<g id="r-recent" fill="none" stroke="#5b5b5b" stroke-width="1.3">
  <path d="M9.2 24.4 H0.65 V0.65 H9.2 L15.5 7.2 V13.2" fill="#f7f7f7"/>
  <path d="M9.2 0.65 V7.2 H15.5"/>
  <circle cx="14.8" cy="19.5" r="5.5" fill="#fff" stroke="#3a9bdc" stroke-width="1.3"/>
  <path d="M13.9 16.3 V20.1 H16.6" stroke-width="1.2"/>
</g>
<g id="r-existing" fill="none" stroke="#5b5b5b" stroke-width="1.3">
  <path d="M10 24.4 H0.65 V0.65 H9.2 L15.5 7.2 V10.5" fill="#f7f7f7"/>
  <path d="M9.2 0.65 V7.2 H15.5"/>
  <path d="M11.3 13 V23.8 C11.3 25.6 19.9 25.6 19.9 23.8 V13" fill="#fff" stroke="#e8853b"/>
  <ellipse cx="15.6" cy="13" rx="4.3" ry="1.8" fill="#fff" stroke="#e8853b"/>
</g>
<g id="r-refresh" fill="none" stroke="#5b5b5b" stroke-width="1.3">
  <path d="M0.65 22.4 V0.65 H8.5"/>
  <path d="M9 24.1 H2.7 V2.7 H11.2 L16.9 9 V12.5" fill="#f7f7f7"/>
  <path d="M11.2 2.7 V9 H16.9"/>
  <path d="M10.2 18.2 A4.6 4.6 0 0 1 18.6 16.6" stroke="#3fae5a" stroke-width="1.5"/>
  <path d="M18.9 21 A4.6 4.6 0 0 1 10.5 22.6" stroke="#3fae5a" stroke-width="1.5"/>
  <path d="M19.6 13.8 V17.6 H15.8 Z M9.5 25.4 V21.6 H13.3 Z" fill="#3fae5a" stroke="none"/>
</g>
<g id="r-qc" fill="none" stroke="#5b5b5b" stroke-width="1.3">
  <rect x="0.65" y="0.65" width="11" height="10.3" fill="#fff"/>
  <rect x="0.65" y="0.65" width="11" height="2.3" fill="#5b5b5b" stroke="none"/>
  <rect x="7.6" y="3" width="3.4" height="7.6" fill="#8cc3ee" stroke="none"/>
  <path d="M8.4 4.6 H10.2 M8.4 6.6 H10.2 M8.4 8.6 H10.2" stroke="#2b8ad8" stroke-width="0.9"/>
</g>
<g id="r-props" fill="none" stroke="#c6c6c6" stroke-width="1.2">
  <rect x="0.6" y="0.6" width="9" height="12.6" rx="0.8" fill="#fbfbfb"/>
  <path d="M3 4.2 H4.6 M3 8.2 H4.6 M6 4.2 H7.4 M6 8.2 H7.4" stroke-width="1.1"/>
</g>
<g id="r-wblinks" fill="none" stroke="#c6c6c6" stroke-width="1.2">
  <path d="M4.8 13.2 H0.6 V0.6 H5.6 L9.4 4.6 V7.6" fill="#fbfbfb"/>
  <path d="M5.6 0.6 V4.6 H9.4"/>
  <ellipse cx="5.8" cy="10.4" rx="2.6" ry="1.8"/>
  <ellipse cx="8.3" cy="11.6" rx="2.6" ry="1.8"/>
</g>
<g id="r-sortaz">
  <text x="0" y="6.5" font-family="Liberation Sans" font-weight="600" font-size="9" fill="#2b8ad8" textLength="5.4" lengthAdjust="spacingAndGlyphs">A</text>
  <text x="0" y="13.4" font-family="Liberation Sans" font-weight="600" font-size="9" fill="#444" textLength="5.4" lengthAdjust="spacingAndGlyphs">Z</text>
  <path d="M9.7 0.2 V13.2 M6.9 10.2 L9.7 13.6 L12.5 10.2" fill="none" stroke="#444" stroke-width="1.1"/>
</g>
<g id="r-sortza">
  <text x="0" y="6.5" font-family="Liberation Sans" font-weight="600" font-size="9" fill="#444" textLength="5.4" lengthAdjust="spacingAndGlyphs">Z</text>
  <text x="0" y="13.4" font-family="Liberation Sans" font-weight="600" font-size="9" fill="#2b8ad8" textLength="5.4" lengthAdjust="spacingAndGlyphs">A</text>
  <path d="M9.7 0.2 V13.2 M6.9 10.2 L9.7 13.6 L12.5 10.2" fill="none" stroke="#444" stroke-width="1.1"/>
</g>
<g id="r-sort">
  <rect x="0.7" y="0.7" width="19.9" height="22.7" fill="#fff" stroke="#5b5b5b" stroke-width="1.4"/>
  <rect x="0.7" y="0.7" width="19.9" height="3.6" fill="#8a8a8a"/>
  <path d="M10.6 4 V23.4" stroke="#5b5b5b" stroke-width="1.3"/>
  <text x="2.6" y="12.4" font-family="Liberation Sans" font-size="8.6" font-weight="bold" fill="#555" textLength="5.6" lengthAdjust="spacingAndGlyphs">Z</text>
  <text x="2.4" y="20.8" font-family="Liberation Sans" font-size="8.6" font-weight="bold" fill="#2b8ad8" textLength="6" lengthAdjust="spacingAndGlyphs">A</text>
  <text x="12.6" y="12.4" font-family="Liberation Sans" font-size="8.6" font-weight="bold" fill="#2b8ad8" textLength="6" lengthAdjust="spacingAndGlyphs">A</text>
  <text x="12.8" y="20.8" font-family="Liberation Sans" font-size="8.6" font-weight="bold" fill="#555" textLength="5.6" lengthAdjust="spacingAndGlyphs">Z</text>
</g>
<g id="r-filter" fill="none" stroke="#5b5b5b" stroke-width="1.4">
  <path d="M0.9 1.2 C0.9 0.8 1.2 0.7 1.6 0.7 H19.4 C19.8 0.7 20.1 0.8 20.1 1.2 V3 L13.3 12.4 V23 C13.3 23.5 13 23.7 12.6 23.7 H8.6 C8.2 23.7 7.9 23.5 7.9 23 V12.4 L0.9 3 Z" fill="#f7f7f7"/>
</g>
<g id="r-sfunnel" fill="none" stroke="#c6c6c6" stroke-width="1.2">
  <path d="M0.6 0.6 H12.2 V1.8 L7.8 6.8 V12.8 H5 V6.8 L0.6 1.8 Z" fill="#fafafa"/>
</g>
<g id="r-clear" fill="none" stroke="#c6c6c6" stroke-width="1.2">
  <path d="M0.6 0.6 H12.2 V1.8 L7.8 6.8 V12.8 H5 V6.8 L0.6 1.8 Z" fill="#fafafa"/>
  <path d="M7.8 8.8 L11.2 12.6 M11.2 8.8 L7.8 12.6" stroke-width="1"/>
</g>
<g id="r-reapply" fill="none" stroke="#c6c6c6" stroke-width="1.2">
  <path d="M0.6 0.6 H12.2 V1.8 L7.8 6.8 V12.8 H5 V6.8 L0.6 1.8 Z" fill="#fafafa"/>
  <circle cx="8.8" cy="10.2" r="2.6" stroke-width="1"/>
</g>
<g id="r-advanced" fill="none" stroke="#5b5b5b" stroke-width="1.2">
  <path d="M0.6 0.6 H12.2 V1.8 L7.8 6.8 V12.8 H5 V6.8 L0.6 1.8 Z" fill="#fafafa"/>
  <rect x="6.8" y="7.6" width="5" height="6" fill="#2b8ad8" stroke="none"/>
  <path d="M6.8 10.6 H11.8 M9.3 7.6 V13.6" stroke="#fff" stroke-width="0.8"/>
</g>
</defs>

<use href="#r-getdata" transform="translate(569.00 78.50) scale(0.7200 1)"/>
<use href="#r-textcsv" transform="translate(595.00 78.50) scale(0.7200 1)"/>
<use href="#r-web" transform="translate(620.80 78.50) scale(0.7200 1)"/>
<use href="#r-table" transform="translate(649.20 78.60) scale(0.7200 1)"/>
<use href="#r-recent" transform="translate(682.00 78.70) scale(0.7200 1)"/>
<use href="#r-existing" transform="translate(719.40 78.70) scale(0.7200 1)"/>
<use href="#r-refresh" transform="translate(758.00 78.70) scale(0.7200 1)"/>
<use href="#r-qc" transform="translate(779.00 78.70) scale(0.7200 1)"/>
<use href="#r-props" transform="translate(780.00 100.00) scale(0.7200 1)"/>
<use href="#r-wblinks" transform="translate(780.00 122.70) scale(0.7200 1)"/>
<use href="#r-sortaz" transform="translate(870.00 84.60) scale(0.7200 1)"/>
<use href="#r-sortza" transform="translate(870.00 112.50) scale(0.7200 1)"/>
<use href="#r-sort" transform="translate(885.60 78.70) scale(0.7200 1)"/>
<use href="#r-filter" transform="translate(914.30 78.70) scale(0.7200 1)"/>
<use href="#r-clear" transform="translate(936.00 78.70) scale(0.7200 1)"/>
<use href="#r-reapply" transform="translate(936.00 100.40) scale(0.7200 1)"/>
<use href="#r-advanced" transform="translate(936.00 122.40) scale(0.7200 1)"/>
<line x1="703.90" y1="80.50" x2="703.90" y2="116.00" stroke="#dcdcdc" stroke-width="1.00"/>
<line x1="748.30" y1="76.00" x2="748.30" y2="154.00" stroke="#dcdcdc" stroke-width="1.00"/>
<line x1="864.00" y1="76.00" x2="864.00" y2="154.00" stroke="#dcdcdc" stroke-width="1.00"/>
<line x1="907.60" y1="81.00" x2="907.60" y2="135.50" stroke="#dcdcdc" stroke-width="1.00"/>
<line x1="984.50" y1="76.00" x2="984.50" y2="154.00" stroke="#dcdcdc" stroke-width="1.00"/>
<line x1="1179.30" y1="76.00" x2="1179.30" y2="153.40" stroke="#dcdcdc" stroke-width="1.00"/>
<path d="M995.2 82.7 H1001.5 M995.2 86.1 H1001.5 M997 89.5 H1001.5" stroke="#5b5b5b" stroke-width="1.2"/>
<path d="M996 91 C992.6 93 992.6 100 998.6 102.4" fill="none" stroke="#3a9bdc" stroke-width="1.2"/>
<path d="M997.2 99.6 L999.4 102.6 L996.4 104.8" fill="none" stroke="#3a9bdc" stroke-width="1.2"/>
<rect x="1004.6" y="79.2" width="4.9" height="23.6" fill="#fff" stroke="#5b5b5b" stroke-width="1.2"/>
<path d="M1004.6 87.1 H1009.5 M1004.6 95 H1009.5" stroke="#5b5b5b" stroke-width="1.1"/>
<path d="M1006 82.6 H1008 M1006 90.8 H1008 M1006 98.8 H1008" stroke="#3a9bdc" stroke-width="1.1"/>
<rect x="1020.4" y="81.6" width="14.1" height="18.6" fill="#fff" stroke="#5b5b5b" stroke-width="1.2"/>
<rect x="1024.5" y="81.6" width="6.5" height="18.6" fill="#8cc3ee"/>
<path d="M1020.4 87.8 H1034.5 M1020.4 94 H1034.5 M1024.5 81.6 V100.2 M1031 81.6 V100.2" stroke="#5b5b5b" stroke-width="1.1"/>
<path d="M1024.5 81.6 V100.2 M1031 81.6 V100.2" stroke="#2b8ad8" stroke-width="1.2"/>
<path d="M1022.6 77 L1019.2 86.4 H1022 L1019.6 94.8 L1025.8 84.4 H1023 L1025.6 77 Z" fill="#f2a71b" stroke="#e87d1e" stroke-width="0.6"/>
<rect x="1050.6" y="79.3" width="10.2" height="23.4" fill="#fff" stroke="#2b7bd0" stroke-width="1.1"/>
<rect x="1050.6" y="79.3" width="10.2" height="7.6" fill="#7ab6ea" stroke="#2b7bd0" stroke-width="1.1"/>
<rect x="1050.6" y="94.8" width="10.2" height="7.9" fill="#7ab6ea" stroke="#2b7bd0" stroke-width="1.1"/>
<path d="M1051 87 V94.8 M1060.8 87 V94" stroke="#5b5b5b" stroke-width="1.1"/>
<path d="M1057.3 94.6 L1064.6 104.8 M1064.6 94.6 L1057.3 104.8" stroke="#e8424a" stroke-width="1.2"/>
<rect x="1084.4" y="81" width="10.6" height="7.3" fill="#fff" stroke="#5b5b5b" stroke-width="1.2"/>
<rect x="1084.4" y="93.5" width="10.6" height="7" fill="#fff" stroke="#5b5b5b" stroke-width="1.2"/>
<path d="M1093 85 L1095.4 88 L1100.2 80.2" fill="none" stroke="#3fae5a" stroke-width="1.3"/>
<ellipse cx="1096.3" cy="97.2" rx="3.2" ry="3.9" fill="#fff" stroke="#e8424a" stroke-width="1.2"/>
<path d="M1094.2 94.6 L1098.4 99.8" stroke="#e8424a" stroke-width="1.2"/>
<rect x="1121.4" y="79" width="6.5" height="7.4" fill="#fff" stroke="#5b5b5b" stroke-width="1.2"/>
<rect x="1121.4" y="86.4" width="6.5" height="7.6" fill="#fff" stroke="#5b5b5b" stroke-width="1.2"/>
<rect x="1121.4" y="94" width="6.5" height="8.2" fill="#fff" stroke="#5b5b5b" stroke-width="1.2"/>
<path d="M1124.2 90.4 H1131 M1127.8 87.4 C1129.4 88.4 1129.4 92.4 1127.8 93.4" fill="none" stroke="#3a9bdc" stroke-width="1.1"/>
<rect x="1131" y="87.6" width="5.6" height="5.6" rx="0.8" fill="#fff" stroke="#3a9bdc" stroke-width="1.1"/>
<path d="M1132.6 90.4 H1135" stroke="#777" stroke-width="1"/>
<path d="M1153.6 86 C1153.6 81 1157 78.4 1161.4 78.4 C1165 78.4 1167.6 80 1168.4 82.6 L1169.2 84 V97.6 L1162.6 103.8 L1158.2 103.2 C1155.4 102.4 1153.6 100.4 1153.6 97.4 Z" fill="#6dbe2e"/>
<path d="M1156.4 87.6 L1163.4 82.2 L1167.2 84.6 V98.4 L1161.6 102.4 L1156.4 99.8 Z" fill="none" stroke="#fff" stroke-width="0.8"/>
<rect x="1162.0" y="86.4" width="2" height="2.6" fill="#fff"/>
<rect x="1162.0" y="89.8" width="2" height="2.6" fill="#fff"/>
<rect x="1162.0" y="93.2" width="2" height="2.6" fill="#fff"/>
<rect x="1162.0" y="96.6" width="2" height="2.6" fill="#fff"/>
<rect x="1164.6" y="85.1" width="2" height="2.6" fill="#fff"/>
<rect x="1164.6" y="88.5" width="2" height="2.6" fill="#fff"/>
<rect x="1164.6" y="91.9" width="2" height="2.6" fill="#fff"/>
<rect x="1164.6" y="95.3" width="2" height="2.6" fill="#fff"/>
<path d="M1158.6 92 V98.4 C1158.6 99.6 1160 99.6 1160 98.4" fill="none" stroke="#fff" stroke-width="0.8"/>
<rect x="1191.2" y="81.3" width="8" height="19.4" fill="#7ab6ea" stroke="#2b7bd0" stroke-width="1.1"/>
<rect x="1191.2" y="88" width="8" height="5.6" fill="#fff" stroke="#5b5b5b" stroke-width="1"/>
<path d="M581.70 126.60 L583.30 128.60 L584.90 126.60" fill="none" stroke="#444" stroke-width="0.90"/>
<path d="M768.60 128.40 L770.20 130.40 L771.80 128.40" fill="none" stroke="#444" stroke-width="0.90"/>
<path d="M1105.40 128.20 L1107.00 130.20 L1108.60 128.20" fill="none" stroke="#444" stroke-width="0.90"/>
<path d="M1170.80 126.60 L1172.40 128.60 L1174.00 126.60" fill="none" stroke="#444" stroke-width="0.90"/>
</svg>
<div class="t" style="left:570.10px;top:108.89px;font-size:10.174px;line-height:10.174px;color:#474747;transform:scaleX(0.6037);-webkit-text-stroke:0.05px currentColor;">Get</div>
<div class="t" style="left:565.80px;top:122.89px;font-size:10.174px;line-height:10.174px;color:#474747;transform:scaleX(0.6049);-webkit-text-stroke:0.05px currentColor;">Data</div>
<div class="t" style="left:593.70px;top:108.89px;font-size:10.174px;line-height:10.174px;color:#474747;transform:scaleX(0.6108);-webkit-text-stroke:0.05px currentColor;">From</div>
<div class="t" style="left:588.70px;top:122.89px;font-size:10.174px;line-height:10.174px;color:#474747;transform:scaleX(0.5919);-webkit-text-stroke:0.05px currentColor;">Text/CSV</div>
<div class="t" style="left:619.80px;top:108.89px;font-size:10.174px;line-height:10.174px;color:#474747;transform:scaleX(0.5982);-webkit-text-stroke:0.05px currentColor;">From</div>
<div class="t" style="left:620.20px;top:122.89px;font-size:10.174px;line-height:10.174px;color:#474747;transform:scaleX(0.6317);-webkit-text-stroke:0.05px currentColor;">Web</div>
<div class="t" style="left:640.20px;top:108.89px;font-size:10.174px;line-height:10.174px;color:#474747;transform:scaleX(0.6221);-webkit-text-stroke:0.05px currentColor;">From Table/</div>
<div class="t" style="left:648.25px;top:122.89px;font-size:10.174px;line-height:10.174px;color:#474747;transform:scaleX(0.5837);-webkit-text-stroke:0.05px currentColor;">Range</div>
<div class="t" style="left:679.00px;top:108.89px;font-size:10.174px;line-height:10.174px;color:#474747;transform:scaleX(0.5832);-webkit-text-stroke:0.05px currentColor;">Recent</div>
<div class="t" style="left:677.40px;top:122.89px;font-size:10.174px;line-height:10.174px;color:#474747;transform:scaleX(0.5787);-webkit-text-stroke:0.05px currentColor;">Sources</div>
<div class="t" style="left:715.00px;top:108.89px;font-size:10.174px;line-height:10.174px;color:#474747;transform:scaleX(0.5951);-webkit-text-stroke:0.05px currentColor;">Existing</div>
<div class="t" style="left:708.00px;top:122.89px;font-size:10.174px;line-height:10.174px;color:#474747;transform:scaleX(0.6188);-webkit-text-stroke:0.05px currentColor;">Connections</div>
<div class="t" style="left:753.90px;top:111.59px;font-size:10.174px;line-height:10.174px;color:#474747;transform:scaleX(0.6091);-webkit-text-stroke:0.05px currentColor;">Refresh</div>
<div class="t" style="left:758.00px;top:125.39px;font-size:10.174px;line-height:10.174px;color:#474747;transform:scaleX(0.6721);-webkit-text-stroke:0.05px currentColor;">All</div>
<div class="t" style="left:789.80px;top:80.69px;font-size:10.174px;line-height:10.174px;color:#474747;transform:scaleX(0.6222);-webkit-text-stroke:0.05px currentColor;">Queries &amp; Connections</div>
<div class="t" style="left:790.00px;top:103.39px;font-size:10.174px;line-height:10.174px;color:#b9b9b9;transform:scaleX(0.6254);-webkit-text-stroke:0.05px currentColor;">Properties</div>
<div class="t" style="left:790.00px;top:125.39px;font-size:10.174px;line-height:10.174px;color:#b9b9b9;transform:scaleX(0.6205);-webkit-text-stroke:0.05px currentColor;">Workbook Links</div>
<div class="t" style="left:887.20px;top:108.89px;font-size:10.174px;line-height:10.174px;color:#474747;transform:scaleX(0.6216);-webkit-text-stroke:0.05px currentColor;">Sort</div>
<div class="t" style="left:914.70px;top:108.89px;font-size:10.174px;line-height:10.174px;color:#474747;transform:scaleX(0.6325);-webkit-text-stroke:0.05px currentColor;">Filter</div>
<div class="t" style="left:946.80px;top:80.69px;font-size:10.174px;line-height:10.174px;color:#b9b9b9;transform:scaleX(0.6046);-webkit-text-stroke:0.05px currentColor;">Clear</div>
<div class="t" style="left:946.80px;top:103.39px;font-size:10.174px;line-height:10.174px;color:#b9b9b9;transform:scaleX(0.6215);-webkit-text-stroke:0.05px currentColor;">Reapply</div>
<div class="t" style="left:946.80px;top:125.39px;font-size:10.174px;line-height:10.174px;color:#474747;transform:scaleX(0.6276);-webkit-text-stroke:0.05px currentColor;">Advanced</div>
<div class="t" style="left:992.50px;top:108.89px;font-size:10.174px;line-height:10.174px;color:#474747;transform:scaleX(0.6506);-webkit-text-stroke:0.05px currentColor;">Text to</div>
<div class="t" style="left:989.50px;top:122.89px;font-size:10.174px;line-height:10.174px;color:#474747;transform:scaleX(0.6227);-webkit-text-stroke:0.05px currentColor;">Columns</div>
<div class="t" style="left:1020.00px;top:108.89px;font-size:10.174px;line-height:10.174px;color:#474747;transform:scaleX(0.5868);-webkit-text-stroke:0.05px currentColor;">Flash</div>
<div class="t" style="left:1023.50px;top:122.89px;font-size:10.174px;line-height:10.174px;color:#474747;transform:scaleX(0.5847);-webkit-text-stroke:0.05px currentColor;">Fill</div>
<div class="t" style="left:1044.20px;top:108.89px;font-size:10.174px;line-height:10.174px;color:#474747;transform:scaleX(0.6176);-webkit-text-stroke:0.05px currentColor;">Remove</div>
<div class="t" style="left:1040.50px;top:122.89px;font-size:10.174px;line-height:10.174px;color:#474747;transform:scaleX(0.6484);-webkit-text-stroke:0.05px currentColor;">Duplicates</div>
<div class="t" style="left:1084.50px;top:110.69px;font-size:10.174px;line-height:10.174px;color:#474747;transform:scaleX(0.6049);-webkit-text-stroke:0.05px currentColor;">Data</div>
<div class="t" style="left:1074.50px;top:124.69px;font-size:10.174px;line-height:10.174px;color:#474747;transform:scaleX(0.6419);-webkit-text-stroke:0.05px currentColor;">Validation</div>
<div class="t" style="left:1112.00px;top:108.89px;font-size:10.174px;line-height:10.174px;color:#474747;transform:scaleX(0.6327);-webkit-text-stroke:0.05px currentColor;">Consolidate</div>
<div class="t" style="left:1155.10px;top:108.89px;font-size:10.174px;line-height:10.174px;color:#474747;transform:scaleX(0.6049);-webkit-text-stroke:0.05px currentColor;">Data</div>
<div class="t" style="left:1149.60px;top:122.89px;font-size:10.174px;line-height:10.174px;color:#474747;transform:scaleX(0.6712);-webkit-text-stroke:0.05px currentColor;">Model</div>
<div class="t" style="left:1188.50px;top:108.89px;font-size:10.174px;line-height:10.174px;color:#474747;transform:scaleX(0.6225);-webkit-text-stroke:0.05px currentColor;">Wh</div>
<div class="t" style="left:1185.50px;top:122.89px;font-size:10.174px;line-height:10.174px;color:#474747;transform:scaleX(0.6076);-webkit-text-stroke:0.05px currentColor;">Ana</div>
<div class="t" style="left:626.00px;top:146.04px;font-size:8.576px;line-height:8.576px;color:#474747;transform:scaleX(0.6618);-webkit-text-stroke:0.05px currentColor;">Get &amp; Transform Data</div>
<div class="t" style="left:777.00px;top:146.04px;font-size:8.576px;line-height:8.576px;color:#474747;transform:scaleX(0.6554);-webkit-text-stroke:0.05px currentColor;">Queries &amp; Connections</div>
<div class="t" style="left:908.50px;top:146.04px;font-size:8.576px;line-height:8.576px;color:#474747;transform:scaleX(0.6649);-webkit-text-stroke:0.05px currentColor;">Sort &amp; Filter</div>
<div class="t" style="left:1068.00px;top:146.04px;font-size:8.576px;line-height:8.576px;color:#474747;transform:scaleX(0.6689);-webkit-text-stroke:0.05px currentColor;">Data Tools</div>
<div class="r" style="left:558.10px;top:166.90px;width:53.40px;height:19.10px;background:#fff;border-radius:4px;box-shadow:0 0 0.5px rgba(0,0,0,0.15);"></div>
<div class="t" style="left:560.60px;top:171.28px;font-size:11.483px;line-height:11.483px;color:#333;transform:scaleX(0.5944);">O21</div>
<div class="r" style="left:616.30px;top:172.60px;width:2.00px;height:2.00px;background:#444;border-radius:1px;"></div>
<div class="r" style="left:616.30px;top:176.00px;width:2.00px;height:2.00px;background:#444;border-radius:1px;"></div>
<div class="r" style="left:616.30px;top:179.40px;width:2.00px;height:2.00px;background:#444;border-radius:1px;"></div>
<div class="r" style="left:623.00px;top:166.90px;width:38.30px;height:19.10px;background:#fff;border-radius:4px;box-shadow:0 0 0.5px rgba(0,0,0,0.15);"></div>
<div class="r" style="left:665.00px;top:166.70px;width:531.50px;height:19.30px;background:#fff;border-radius:4px;box-shadow:0 0 0.5px rgba(0,0,0,0.15);"></div>
<svg width="1200" height="581"><path d="M626.2 172.2 L632.8 181.4 M632.8 172.2 L626.2 181.4" stroke="#b5b5b5" stroke-width="1" fill="none"/><path d="M637.6 177.4 L640.6 181.4 L646.8 171.8" stroke="#b5b5b5" stroke-width="1" fill="none"/><path d="M603.9 175.8 L606.45 180 L609 175.8" stroke="#444" stroke-width="1.2" fill="none"/></svg>
<svg width="1200" height="581"><g transform="translate(651.2 0) scale(0.74 1)"><text x="0" y="181.2" font-family="Liberation Serif" font-style="italic" font-size="15" fill="#333" stroke="#333" stroke-width="0.1">f</text><text x="4.6" y="181.2" font-family="Liberation Serif" font-style="italic" font-size="12" fill="#333" stroke="#333" stroke-width="0.1">x</text></g></svg>
<div class="r" style="left:555.00px;top:192.70px;width:645.00px;height:21.10px;background:#efefef;"></div>
<div class="r" style="left:555.00px;top:213.80px;width:16.25px;height:367.20px;background:#efefef;"></div>
<div class="r" style="left:571.25px;top:213.80px;width:625.35px;height:367.20px;background:#fff;"></div>
<div class="r" style="left:571.25px;top:213.80px;width:625.35px;height:22.00px;background:#ccc0da;"></div>
<div class="r" style="left:1196.60px;top:0.00px;width:1.80px;height:581.00px;background:#dadada;"></div>
<div class="r" style="left:1198.40px;top:0.00px;width:1.60px;height:581.00px;background:#efefef;"></div>
<svg width="1200" height="581">
<path d="M570.2 196.9 V211.9 H560.6 Z" fill="#d4d4d4"/>
<line x1="555" y1="257.50" x2="1196.6" y2="257.50" stroke="#e2e2e2" stroke-width="1"/>
<line x1="555" y1="279.50" x2="1196.6" y2="279.50" stroke="#e2e2e2" stroke-width="1"/>
<line x1="555" y1="301.50" x2="1196.6" y2="301.50" stroke="#e2e2e2" stroke-width="1"/>
<line x1="555" y1="323.50" x2="1196.6" y2="323.50" stroke="#e2e2e2" stroke-width="1"/>
<line x1="555" y1="345.50" x2="1196.6" y2="345.50" stroke="#e2e2e2" stroke-width="1"/>
<line x1="555" y1="366.50" x2="1196.6" y2="366.50" stroke="#e2e2e2" stroke-width="1"/>
<line x1="555" y1="388.50" x2="1196.6" y2="388.50" stroke="#e2e2e2" stroke-width="1"/>
<line x1="555" y1="410.50" x2="1196.6" y2="410.50" stroke="#e2e2e2" stroke-width="1"/>
<line x1="555" y1="432.50" x2="1196.6" y2="432.50" stroke="#e2e2e2" stroke-width="1"/>
<line x1="555" y1="454.50" x2="1196.6" y2="454.50" stroke="#e2e2e2" stroke-width="1"/>
<line x1="555" y1="476.50" x2="1196.6" y2="476.50" stroke="#e2e2e2" stroke-width="1"/>
<line x1="555" y1="497.50" x2="1196.6" y2="497.50" stroke="#e2e2e2" stroke-width="1"/>
<line x1="555" y1="519.50" x2="1196.6" y2="519.50" stroke="#e2e2e2" stroke-width="1"/>
<line x1="555" y1="541.50" x2="1196.6" y2="541.50" stroke="#e2e2e2" stroke-width="1"/>
<line x1="555" y1="563.50" x2="1196.6" y2="563.50" stroke="#e2e2e2" stroke-width="1"/>
<line x1="555" y1="585.50" x2="1196.6" y2="585.50" stroke="#e2e2e2" stroke-width="1"/>
<line x1="615.50" y1="193.70" x2="615.50" y2="213.80" stroke="#dedede" stroke-width="1"/>
<line x1="615.50" y1="235.80" x2="615.50" y2="581" stroke="#e2e2e2" stroke-width="1"/>
<line x1="663.50" y1="193.70" x2="663.50" y2="213.80" stroke="#dedede" stroke-width="1"/>
<line x1="663.50" y1="235.80" x2="663.50" y2="581" stroke="#e2e2e2" stroke-width="1"/>
<line x1="739.50" y1="193.70" x2="739.50" y2="213.80" stroke="#dedede" stroke-width="1"/>
<line x1="739.50" y1="235.80" x2="739.50" y2="581" stroke="#e2e2e2" stroke-width="1"/>
<line x1="868.50" y1="193.70" x2="868.50" y2="213.80" stroke="#dedede" stroke-width="1"/>
<line x1="868.50" y1="235.80" x2="868.50" y2="581" stroke="#e2e2e2" stroke-width="1"/>
<line x1="911.50" y1="193.70" x2="911.50" y2="213.80" stroke="#dedede" stroke-width="1"/>
<line x1="911.50" y1="235.80" x2="911.50" y2="581" stroke="#e2e2e2" stroke-width="1"/>
<line x1="986.50" y1="193.70" x2="986.50" y2="213.80" stroke="#dedede" stroke-width="1"/>
<line x1="986.50" y1="235.80" x2="986.50" y2="581" stroke="#e2e2e2" stroke-width="1"/>
<line x1="1024.50" y1="193.70" x2="1024.50" y2="213.80" stroke="#dedede" stroke-width="1"/>
<line x1="1024.50" y1="235.80" x2="1024.50" y2="581" stroke="#e2e2e2" stroke-width="1"/>
<line x1="1076.50" y1="193.70" x2="1076.50" y2="213.80" stroke="#dedede" stroke-width="1"/>
<line x1="1076.50" y1="235.80" x2="1076.50" y2="581" stroke="#e2e2e2" stroke-width="1"/>
<line x1="1096.50" y1="193.70" x2="1096.50" y2="213.80" stroke="#dedede" stroke-width="1"/>
<line x1="1096.50" y1="235.80" x2="1096.50" y2="581" stroke="#e2e2e2" stroke-width="1"/>
<line x1="1151.50" y1="193.70" x2="1151.50" y2="213.80" stroke="#dedede" stroke-width="1"/>
<line x1="1151.50" y1="235.80" x2="1151.50" y2="581" stroke="#e2e2e2" stroke-width="1"/>
<line x1="555" y1="213.80" x2="1196.6" y2="213.80" stroke="#b9b9b9" stroke-width="1.2"/>
<line x1="571.50" y1="192.70" x2="571.50" y2="581" stroke="#cfcfcf" stroke-width="1"/>
</svg>
<div class="t" style="left:590.71px;top:195.72px;font-size:16.279px;line-height:16.279px;color:#444;transform:scaleX(0.5000);">A</div>
<div class="t" style="left:636.84px;top:195.72px;font-size:16.279px;line-height:16.279px;color:#444;transform:scaleX(0.5000);">B</div>
<div class="t" style="left:698.41px;top:195.72px;font-size:16.279px;line-height:16.279px;color:#444;transform:scaleX(0.5000);">C</div>
<div class="t" style="left:801.01px;top:195.72px;font-size:16.279px;line-height:16.279px;color:#444;transform:scaleX(0.5000);">D</div>
<div class="t" style="left:887.14px;top:195.72px;font-size:16.279px;line-height:16.279px;color:#444;transform:scaleX(0.5000);">E</div>
<div class="t" style="left:946.36px;top:195.72px;font-size:16.279px;line-height:16.279px;color:#444;transform:scaleX(0.5000);">F</div>
<div class="t" style="left:1002.38px;top:195.72px;font-size:16.279px;line-height:16.279px;color:#444;transform:scaleX(0.5000);">G</div>
<div class="t" style="left:1047.66px;top:195.72px;font-size:16.279px;line-height:16.279px;color:#444;transform:scaleX(0.5000);">H</div>
<div class="t" style="left:1085.57px;top:195.72px;font-size:16.279px;line-height:16.279px;color:#444;transform:scaleX(0.5000);">I</div>
<div class="t" style="left:1122.22px;top:195.72px;font-size:16.279px;line-height:16.279px;color:#444;transform:scaleX(0.5000);">J</div>
<div class="t" style="left:1171.54px;top:195.72px;font-size:16.279px;line-height:16.279px;color:#444;transform:scaleX(0.5000);">K</div>
<div class="t" style="left:572.85px;top:218.79px;font-size:13.953px;line-height:13.953px;color:#1e1e1e;transform:scaleX(0.6445);font-weight:bold;">Emp-ID</div>
<div class="t" style="left:617.20px;top:218.79px;font-size:13.953px;line-height:13.953px;color:#1e1e1e;transform:scaleX(0.6421);font-weight:bold;">Staff</div>
<div class="t" style="left:665.10px;top:218.79px;font-size:13.953px;line-height:13.953px;color:#1e1e1e;transform:scaleX(0.6376);font-weight:bold;">Father&#x27;s</div>
<div class="t" style="left:701.68px;top:218.79px;font-size:13.953px;line-height:13.953px;color:#1e1e1e;transform:scaleX(0.6679);font-weight:bold;">Name</div>
<div class="t" style="left:740.80px;top:218.79px;font-size:13.953px;line-height:13.953px;color:#1e1e1e;transform:scaleX(0.6149);font-weight:bold;">Address</div>
<div class="t" style="left:870.30px;top:218.79px;font-size:13.953px;line-height:13.953px;color:#1e1e1e;transform:scaleX(0.6246);font-weight:bold;">City</div>
<div class="t" style="left:912.60px;top:218.79px;font-size:13.953px;line-height:13.953px;color:#1e1e1e;transform:scaleX(0.6492);font-weight:bold;">State</div>
<div class="t" style="left:988.30px;top:218.79px;font-size:13.953px;line-height:13.953px;color:#1e1e1e;transform:scaleX(0.6271);font-weight:bold;">Pincode</div>
<div class="t" style="left:1026.00px;top:218.79px;font-size:13.953px;line-height:13.953px;color:#1e1e1e;transform:scaleX(0.6201);font-weight:bold;">DOB</div>
<div class="t" style="left:1078.40px;top:218.79px;font-size:13.953px;line-height:13.953px;color:#1e1e1e;transform:scaleX(0.6191);font-weight:bold;">Age</div>
<div class="t" style="left:1098.20px;top:218.79px;font-size:13.953px;line-height:13.953px;color:#1e1e1e;transform:scaleX(0.6364);font-weight:bold;">Contact</div>
<div class="t" style="left:1153.50px;top:218.79px;font-size:13.953px;line-height:13.953px;color:#1e1e1e;transform:scaleX(0.5936);font-weight:bold;">Sales</div>
<div class="t" style="left:572.85px;top:239.70px;font-size:15.116px;line-height:15.116px;color:#1e1e1e;transform:scaleX(0.6031);">EMP1001</div>
<div class="t" style="left:617.20px;top:239.70px;font-size:15.116px;line-height:15.116px;color:#1e1e1e;transform:scaleX(0.6692);">Nitin</div>
<div class="t" style="left:665.10px;top:239.70px;font-size:15.116px;line-height:15.116px;color:#1e1e1e;transform:scaleX(0.5476);">Jai</div>
<div class="t" style="left:678.01px;top:239.70px;font-size:15.116px;line-height:15.116px;color:#1e1e1e;transform:scaleX(0.6109);">Kishor</div>
<div class="t" style="left:740.80px;top:239.70px;font-size:15.116px;line-height:15.116px;color:#1e1e1e;transform:scaleX(0.6021);">9 ,</div>
<div class="t" style="left:753.25px;top:239.70px;font-size:15.116px;line-height:15.116px;color:#1e1e1e;transform:scaleX(0.6161);">Gandhi</div>
<div class="t" style="left:785.61px;top:239.70px;font-size:15.116px;line-height:15.116px;color:#1e1e1e;transform:scaleX(0.6440);">MargMarg</div>
<div class="t" style="left:870.30px;top:239.70px;font-size:15.116px;line-height:15.116px;color:#1e1e1e;transform:scaleX(0.6194);">Bhopal</div>
<div class="t" style="left:912.60px;top:239.70px;font-size:15.116px;line-height:15.116px;color:#1e1e1e;transform:scaleX(0.6151);">Punjab</div>
<div class="t" style="left:991.88px;top:239.70px;font-size:15.116px;line-height:15.116px;color:#1e1e1e;transform:scaleX(0.6209);">800001</div>
<div class="t" style="left:1027.53px;top:239.70px;font-size:15.116px;line-height:15.116px;color:#1e1e1e;transform:scaleX(0.6216);">22-07-1996</div>
<div class="t" style="left:1084.96px;top:239.70px;font-size:15.116px;line-height:15.116px;color:#1e1e1e;transform:scaleX(0.6209);">35</div>
<div class="t" style="left:1098.50px;top:239.70px;font-size:15.116px;line-height:15.116px;color:#1e1e1e;transform:scaleX(0.6209);">9390197939</div>
<div class="t" style="left:1153.50px;top:239.70px;font-size:15.116px;line-height:15.116px;color:#1e1e1e;transform:scaleX(0.5668);">IT</div>
<div class="t" style="left:572.85px;top:261.54px;font-size:15.116px;line-height:15.116px;color:#1e1e1e;transform:scaleX(0.6031);">EMP1002</div>
<div class="t" style="left:617.20px;top:261.54px;font-size:15.116px;line-height:15.116px;color:#1e1e1e;transform:scaleX(0.6627);">Monu</div>
<div class="t" style="left:665.10px;top:261.54px;font-size:15.116px;line-height:15.116px;color:#1e1e1e;transform:scaleX(0.5978);">Jaideep</div>
<div class="t" style="left:699.08px;top:261.54px;font-size:15.116px;line-height:15.116px;color:#1e1e1e;transform:scaleX(0.6174);">Thakur</div>
<div class="t" style="left:740.80px;top:261.54px;font-size:15.116px;line-height:15.116px;color:#1e1e1e;transform:scaleX(0.6084);">56 ,</div>
<div class="t" style="left:758.47px;top:261.54px;font-size:15.116px;line-height:15.116px;color:#1e1e1e;transform:scaleX(0.6151);">Patel</div>
<div class="t" style="left:781.99px;top:261.54px;font-size:15.116px;line-height:15.116px;color:#1e1e1e;transform:scaleX(0.6353);">StreetStreetMarg</div>
<div class="t" style="left:870.30px;top:261.54px;font-size:15.116px;line-height:15.116px;color:#1e1e1e;transform:scaleX(0.6064);">Chennai</div>
<div class="t" style="left:912.60px;top:261.54px;font-size:15.116px;line-height:15.116px;color:#1e1e1e;transform:scaleX(0.6726);">Uttar</div>
<div class="t" style="left:936.96px;top:261.54px;font-size:15.116px;line-height:15.116px;color:#1e1e1e;transform:scaleX(0.6007);">Pradesh</div>
<div class="t" style="left:991.88px;top:261.54px;font-size:15.116px;line-height:15.116px;color:#1e1e1e;transform:scaleX(0.6209);">302001</div>
<div class="t" style="left:1027.53px;top:261.54px;font-size:15.116px;line-height:15.116px;color:#1e1e1e;transform:scaleX(0.6216);">05-08-1998</div>
<div class="t" style="left:1084.96px;top:261.54px;font-size:15.116px;line-height:15.116px;color:#1e1e1e;transform:scaleX(0.6209);">28</div>
<div class="t" style="left:1098.50px;top:261.54px;font-size:15.116px;line-height:15.116px;color:#1e1e1e;transform:scaleX(0.6293);">9411742917</div>
<div class="t" style="left:1153.50px;top:261.54px;font-size:15.116px;line-height:15.116px;color:#1e1e1e;transform:scaleX(0.6012);">Finance</div>
<div class="t" style="left:572.85px;top:283.38px;font-size:15.116px;line-height:15.116px;color:#1e1e1e;transform:scaleX(0.6031);">EMP1003</div>
<div class="t" style="left:617.20px;top:283.38px;font-size:15.116px;line-height:15.116px;color:#1e1e1e;transform:scaleX(0.6047);">Harsh</div>
<div class="t" style="left:665.10px;top:283.38px;font-size:15.116px;line-height:15.116px;color:#1e1e1e;transform:scaleX(0.6489);">Mohan</div>
<div class="t" style="left:697.42px;top:283.38px;font-size:15.116px;line-height:15.116px;color:#1e1e1e;transform:scaleX(0.6031);">Chauhan</div>
<div class="t" style="left:740.80px;top:283.38px;font-size:15.116px;line-height:15.116px;color:#1e1e1e;transform:scaleX(0.6084);">44 ,</div>
<div class="t" style="left:758.47px;top:283.38px;font-size:15.116px;line-height:15.116px;color:#1e1e1e;transform:scaleX(0.6417);">Temple</div>
<div class="t" style="left:792.07px;top:283.38px;font-size:15.116px;line-height:15.116px;color:#1e1e1e;transform:scaleX(0.6083);">RoadRoadMarg</div>
<div class="t" style="left:870.30px;top:283.38px;font-size:15.116px;line-height:15.116px;color:#1e1e1e;transform:scaleX(0.6024);">Pune</div>
<div class="t" style="left:912.60px;top:283.38px;font-size:15.116px;line-height:15.116px;color:#1e1e1e;transform:scaleX(0.6726);">Uttar</div>
<div class="t" style="left:936.96px;top:283.38px;font-size:15.116px;line-height:15.116px;color:#1e1e1e;transform:scaleX(0.6007);">Pradesh</div>
<div class="t" style="left:991.88px;top:283.38px;font-size:15.116px;line-height:15.116px;color:#1e1e1e;transform:scaleX(0.6209);">600020</div>
<div class="t" style="left:1027.53px;top:283.38px;font-size:15.116px;line-height:15.116px;color:#1e1e1e;transform:scaleX(0.6216);">20-07-1987</div>
<div class="t" style="left:1084.96px;top:283.38px;font-size:15.116px;line-height:15.116px;color:#1e1e1e;transform:scaleX(0.6209);">27</div>
<div class="t" style="left:1098.50px;top:283.38px;font-size:15.116px;line-height:15.116px;color:#1e1e1e;transform:scaleX(0.6209);">9001410108</div>
<div class="t" style="left:1153.50px;top:283.38px;font-size:15.116px;line-height:15.116px;color:#1e1e1e;transform:scaleX(0.5668);">IT</div>
<div class="t" style="left:572.85px;top:305.22px;font-size:15.116px;line-height:15.116px;color:#1e1e1e;transform:scaleX(0.6031);">EMP1004</div>
<div class="t" style="left:617.20px;top:305.22px;font-size:15.116px;line-height:15.116px;color:#1e1e1e;transform:scaleX(0.6627);">Monu</div>
<div class="t" style="left:665.10px;top:305.22px;font-size:15.116px;line-height:15.116px;color:#1e1e1e;transform:scaleX(0.5978);">Jaideep</div>
<div class="t" style="left:699.08px;top:305.22px;font-size:15.116px;line-height:15.116px;color:#1e1e1e;transform:scaleX(0.6174);">Thakur</div>
<div class="t" style="left:740.80px;top:305.22px;font-size:15.116px;line-height:15.116px;color:#1e1e1e;transform:scaleX(0.6021);">9 ,</div>
<div class="t" style="left:753.25px;top:305.22px;font-size:15.116px;line-height:15.116px;color:#1e1e1e;transform:scaleX(0.6161);">Gandhi</div>
<div class="t" style="left:785.61px;top:305.22px;font-size:15.116px;line-height:15.116px;color:#1e1e1e;transform:scaleX(0.6440);">MargMargMarg</div>
<div class="t" style="left:870.30px;top:305.22px;font-size:15.116px;line-height:15.116px;color:#1e1e1e;transform:scaleX(0.6539);">Mumbai</div>
<div class="t" style="left:912.60px;top:305.22px;font-size:15.116px;line-height:15.116px;color:#1e1e1e;transform:scaleX(0.6726);">Uttar</div>
<div class="t" style="left:936.96px;top:305.22px;font-size:15.116px;line-height:15.116px;color:#1e1e1e;transform:scaleX(0.6007);">Pradesh</div>
<div class="t" style="left:991.88px;top:305.22px;font-size:15.116px;line-height:15.116px;color:#1e1e1e;transform:scaleX(0.6209);">800001</div>
<div class="t" style="left:1027.53px;top:305.22px;font-size:15.116px;line-height:15.116px;color:#1e1e1e;transform:scaleX(0.6216);">16-03-1985</div>
<div class="t" style="left:1084.96px;top:305.22px;font-size:15.116px;line-height:15.116px;color:#1e1e1e;transform:scaleX(0.6209);">32</div>
<div class="t" style="left:1098.50px;top:305.22px;font-size:15.116px;line-height:15.116px;color:#1e1e1e;transform:scaleX(0.6209);">9190169014</div>
<div class="t" style="left:1153.50px;top:305.22px;font-size:15.116px;line-height:15.116px;color:#1e1e1e;transform:scaleX(0.5602);">Sales</div>
<div class="t" style="left:572.85px;top:327.06px;font-size:15.116px;line-height:15.116px;color:#1e1e1e;transform:scaleX(0.6031);">EMP1005</div>
<div class="t" style="left:617.20px;top:327.06px;font-size:15.116px;line-height:15.116px;color:#1e1e1e;transform:scaleX(0.6269);">Mahesh</div>
<div class="t" style="left:665.10px;top:327.06px;font-size:15.116px;line-height:15.116px;color:#1e1e1e;transform:scaleX(0.6061);">Subham</div>
<div class="t" style="left:701.56px;top:327.06px;font-size:15.116px;line-height:15.116px;color:#1e1e1e;transform:scaleX(0.6180);">Kumar</div>
<div class="t" style="left:740.80px;top:327.06px;font-size:15.116px;line-height:15.116px;color:#1e1e1e;transform:scaleX(0.6084);">56 ,</div>
<div class="t" style="left:758.47px;top:327.06px;font-size:15.116px;line-height:15.116px;color:#1e1e1e;transform:scaleX(0.6151);">Patel</div>
<div class="t" style="left:781.99px;top:327.06px;font-size:15.116px;line-height:15.116px;color:#1e1e1e;transform:scaleX(0.6353);">StreetStreetMarg</div>
<div class="t" style="left:870.30px;top:327.06px;font-size:15.116px;line-height:15.116px;color:#1e1e1e;transform:scaleX(0.6064);">Chennai</div>
<div class="t" style="left:912.60px;top:327.06px;font-size:15.116px;line-height:15.116px;color:#1e1e1e;transform:scaleX(0.6047);">Rajasthan</div>
<div class="t" style="left:991.88px;top:327.06px;font-size:15.116px;line-height:15.116px;color:#1e1e1e;transform:scaleX(0.6209);">302001</div>
<div class="t" style="left:1027.53px;top:327.06px;font-size:15.116px;line-height:15.116px;color:#1e1e1e;transform:scaleX(0.6216);">09-08-1997</div>
<div class="t" style="left:1084.96px;top:327.06px;font-size:15.116px;line-height:15.116px;color:#1e1e1e;transform:scaleX(0.6209);">26</div>
<div class="t" style="left:1098.50px;top:327.06px;font-size:15.116px;line-height:15.116px;color:#1e1e1e;transform:scaleX(0.6209);">9255629718</div>
<div class="t" style="left:1153.50px;top:327.06px;font-size:15.116px;line-height:15.116px;color:#1e1e1e;transform:scaleX(0.5602);">Sales</div>
<div class="t" style="left:572.85px;top:348.90px;font-size:15.116px;line-height:15.116px;color:#1e1e1e;transform:scaleX(0.6031);">EMP1006</div>
<div class="t" style="left:617.20px;top:348.90px;font-size:15.116px;line-height:15.116px;color:#1e1e1e;transform:scaleX(0.6176);">Dharmesh</div>
<div class="t" style="left:665.10px;top:348.90px;font-size:15.116px;line-height:15.116px;color:#1e1e1e;transform:scaleX(0.6076);">Kapil</div>
<div class="t" style="left:687.85px;top:348.90px;font-size:15.116px;line-height:15.116px;color:#1e1e1e;transform:scaleX(0.6068);">Bhushan</div>
<div class="t" style="left:740.80px;top:348.90px;font-size:15.116px;line-height:15.116px;color:#1e1e1e;transform:scaleX(0.6084);">24 ,</div>
<div class="t" style="left:758.47px;top:348.90px;font-size:15.116px;line-height:15.116px;color:#1e1e1e;transform:scaleX(0.6360);">Nehru</div>
<div class="t" style="left:786.98px;top:348.90px;font-size:15.116px;line-height:15.116px;color:#1e1e1e;transform:scaleX(0.6173);">NagarNagarMarg</div>
<div class="t" style="left:870.30px;top:348.90px;font-size:15.116px;line-height:15.116px;color:#1e1e1e;transform:scaleX(0.6270);">Delhi</div>
<div class="t" style="left:912.60px;top:348.90px;font-size:15.116px;line-height:15.116px;color:#1e1e1e;transform:scaleX(0.6726);">Uttar</div>
<div class="t" style="left:936.96px;top:348.90px;font-size:15.116px;line-height:15.116px;color:#1e1e1e;transform:scaleX(0.6007);">Pradesh</div>
<div class="t" style="left:991.88px;top:348.90px;font-size:15.116px;line-height:15.116px;color:#1e1e1e;transform:scaleX(0.6351);">110065</div>
<div class="t" style="left:1027.53px;top:348.90px;font-size:15.116px;line-height:15.116px;color:#1e1e1e;transform:scaleX(0.6308);">23-11-1987</div>
<div class="t" style="left:1084.96px;top:348.90px;font-size:15.116px;line-height:15.116px;color:#1e1e1e;transform:scaleX(0.6209);">28</div>
<div class="t" style="left:1098.50px;top:348.90px;font-size:15.116px;line-height:15.116px;color:#1e1e1e;transform:scaleX(0.6209);">9469707276</div>
<div class="t" style="left:1153.50px;top:348.90px;font-size:15.116px;line-height:15.116px;color:#1e1e1e;transform:scaleX(0.5602);">Sales</div>
<div class="t" style="left:572.85px;top:370.74px;font-size:15.116px;line-height:15.116px;color:#1e1e1e;transform:scaleX(0.6031);">EMP1007</div>
<div class="t" style="left:617.20px;top:370.74px;font-size:15.116px;line-height:15.116px;color:#1e1e1e;transform:scaleX(0.5908);">Suresh</div>
<div class="t" style="left:665.10px;top:370.74px;font-size:15.116px;line-height:15.116px;color:#1e1e1e;transform:scaleX(0.6076);">Kapil</div>
<div class="t" style="left:687.85px;top:370.74px;font-size:15.116px;line-height:15.116px;color:#1e1e1e;transform:scaleX(0.6041);">Tyagi</div>
<div class="t" style="left:740.80px;top:370.74px;font-size:15.116px;line-height:15.116px;color:#1e1e1e;transform:scaleX(0.6084);">12 ,</div>
<div class="t" style="left:758.47px;top:370.74px;font-size:15.116px;line-height:15.116px;color:#1e1e1e;transform:scaleX(0.5961);">Park</div>
<div class="t" style="left:779.32px;top:370.74px;font-size:15.116px;line-height:15.116px;color:#1e1e1e;transform:scaleX(0.6270);">AvenueAvenueMarg</div>
<div class="t" style="left:870.30px;top:370.74px;font-size:15.116px;line-height:15.116px;color:#1e1e1e;transform:scaleX(0.6270);">Delhi</div>
<div class="t" style="left:912.60px;top:370.74px;font-size:15.116px;line-height:15.116px;color:#1e1e1e;transform:scaleX(0.6047);">Rajasthan</div>
<div class="t" style="left:991.88px;top:370.74px;font-size:15.116px;line-height:15.116px;color:#1e1e1e;transform:scaleX(0.6209);">226010</div>
<div class="t" style="left:1027.53px;top:370.74px;font-size:15.116px;line-height:15.116px;color:#1e1e1e;transform:scaleX(0.6216);">21-12-1998</div>
<div class="t" style="left:1084.96px;top:370.74px;font-size:15.116px;line-height:15.116px;color:#1e1e1e;transform:scaleX(0.6209);">37</div>
<div class="t" style="left:1098.50px;top:370.74px;font-size:15.116px;line-height:15.116px;color:#1e1e1e;transform:scaleX(0.6209);">9104990899</div>
<div class="t" style="left:1153.50px;top:370.74px;font-size:15.116px;line-height:15.116px;color:#1e1e1e;transform:scaleX(0.5501);">HR</div>
<div class="t" style="left:572.85px;top:392.58px;font-size:15.116px;line-height:15.116px;color:#1e1e1e;transform:scaleX(0.6031);">EMP1008</div>
<div class="t" style="left:617.20px;top:392.58px;font-size:15.116px;line-height:15.116px;color:#1e1e1e;transform:scaleX(0.5856);">Rajesh</div>
<div class="t" style="left:665.10px;top:392.58px;font-size:15.116px;line-height:15.116px;color:#1e1e1e;transform:scaleX(0.6692);">Nitin</div>
<div class="t" style="left:687.67px;top:392.58px;font-size:15.116px;line-height:15.116px;color:#1e1e1e;transform:scaleX(0.6180);">Kumar</div>
<div class="t" style="left:740.80px;top:392.58px;font-size:15.116px;line-height:15.116px;color:#1e1e1e;transform:scaleX(0.6084);">18 ,</div>
<div class="t" style="left:758.47px;top:392.58px;font-size:15.116px;line-height:15.116px;color:#1e1e1e;transform:scaleX(0.5718);">Rose</div>
<div class="t" style="left:780.97px;top:392.58px;font-size:15.116px;line-height:15.116px;color:#1e1e1e;transform:scaleX(0.6205);">ColonyColonyMarg</div>
<div class="t" style="left:870.30px;top:392.58px;font-size:15.116px;line-height:15.116px;color:#1e1e1e;transform:scaleX(0.6270);">Delhi</div>
<div class="t" style="left:912.60px;top:392.58px;font-size:15.116px;line-height:15.116px;color:#1e1e1e;transform:scaleX(0.6206);">Bihar</div>
<div class="t" style="left:991.88px;top:392.58px;font-size:15.116px;line-height:15.116px;color:#1e1e1e;transform:scaleX(0.6209);">143001</div>
<div class="t" style="left:1027.53px;top:392.58px;font-size:15.116px;line-height:15.116px;color:#1e1e1e;transform:scaleX(0.6216);">01-12-1996</div>
<div class="t" style="left:1084.96px;top:392.58px;font-size:15.116px;line-height:15.116px;color:#1e1e1e;transform:scaleX(0.6209);">34</div>
<div class="t" style="left:1098.50px;top:392.58px;font-size:15.116px;line-height:15.116px;color:#1e1e1e;transform:scaleX(0.6209);">9020781596</div>
<div class="t" style="left:1153.50px;top:392.58px;font-size:15.116px;line-height:15.116px;color:#1e1e1e;transform:scaleX(0.5668);">IT</div>
<div class="t" style="left:572.85px;top:414.42px;font-size:15.116px;line-height:15.116px;color:#1e1e1e;transform:scaleX(0.6031);">EMP1009</div>
<div class="t" style="left:617.20px;top:414.42px;font-size:15.116px;line-height:15.116px;color:#1e1e1e;transform:scaleX(0.5945);">Sonu</div>
<div class="t" style="left:665.10px;top:414.42px;font-size:15.116px;line-height:15.116px;color:#1e1e1e;transform:scaleX(0.6061);">Subham</div>
<div class="t" style="left:701.56px;top:414.42px;font-size:15.116px;line-height:15.116px;color:#1e1e1e;transform:scaleX(0.6423);">Mishra</div>
<div class="t" style="left:740.80px;top:414.42px;font-size:15.116px;line-height:15.116px;color:#1e1e1e;transform:scaleX(0.6084);">18 ,</div>
<div class="t" style="left:758.47px;top:414.42px;font-size:15.116px;line-height:15.116px;color:#1e1e1e;transform:scaleX(0.5718);">Rose</div>
<div class="t" style="left:780.97px;top:414.42px;font-size:15.116px;line-height:15.116px;color:#1e1e1e;transform:scaleX(0.6205);">ColonyColonyMarg</div>
<div class="t" style="left:870.30px;top:414.42px;font-size:15.116px;line-height:15.116px;color:#1e1e1e;transform:scaleX(0.6270);">Delhi</div>
<div class="t" style="left:912.60px;top:414.42px;font-size:15.116px;line-height:15.116px;color:#1e1e1e;transform:scaleX(0.6151);">Punjab</div>
<div class="t" style="left:991.88px;top:414.42px;font-size:15.116px;line-height:15.116px;color:#1e1e1e;transform:scaleX(0.6209);">143001</div>
<div class="t" style="left:1027.53px;top:414.42px;font-size:15.116px;line-height:15.116px;color:#1e1e1e;transform:scaleX(0.6216);">13-03-1987</div>
<div class="t" style="left:1084.96px;top:414.42px;font-size:15.116px;line-height:15.116px;color:#1e1e1e;transform:scaleX(0.6209);">29</div>
<div class="t" style="left:1098.50px;top:414.42px;font-size:15.116px;line-height:15.116px;color:#1e1e1e;transform:scaleX(0.6209);">9005987624</div>
<div class="t" style="left:1153.50px;top:414.42px;font-size:15.116px;line-height:15.116px;color:#1e1e1e;transform:scaleX(0.5602);">Sales</div>
<div class="t" style="left:572.85px;top:436.26px;font-size:15.116px;line-height:15.116px;color:#1e1e1e;transform:scaleX(0.6031);">EMP1010</div>
<div class="t" style="left:617.20px;top:436.26px;font-size:15.116px;line-height:15.116px;color:#1e1e1e;transform:scaleX(0.6176);">Dharmesh</div>
<div class="t" style="left:665.10px;top:436.26px;font-size:15.116px;line-height:15.116px;color:#1e1e1e;transform:scaleX(0.6076);">Kapil</div>
<div class="t" style="left:687.85px;top:436.26px;font-size:15.116px;line-height:15.116px;color:#1e1e1e;transform:scaleX(0.6068);">Bhushan</div>
<div class="t" style="left:740.80px;top:436.26px;font-size:15.116px;line-height:15.116px;color:#1e1e1e;transform:scaleX(0.6115);">102 ,</div>
<div class="t" style="left:763.69px;top:436.26px;font-size:15.116px;line-height:15.116px;color:#1e1e1e;transform:scaleX(0.6285);">MG</div>
<div class="t" style="left:781.32px;top:436.26px;font-size:15.116px;line-height:15.116px;color:#1e1e1e;transform:scaleX(0.6083);">RoadRoadMarg</div>
<div class="t" style="left:870.30px;top:436.26px;font-size:15.116px;line-height:15.116px;color:#1e1e1e;transform:scaleX(0.6071);">Jaipur</div>
<div class="t" style="left:912.60px;top:436.26px;font-size:15.116px;line-height:15.116px;color:#1e1e1e;transform:scaleX(0.6352);">Madhya</div>
<div class="t" style="left:949.09px;top:436.26px;font-size:15.116px;line-height:15.116px;color:#1e1e1e;transform:scaleX(0.6007);">Pradesh</div>
<div class="t" style="left:991.88px;top:436.26px;font-size:15.116px;line-height:15.116px;color:#1e1e1e;transform:scaleX(0.6209);">400001</div>
<div class="t" style="left:1027.53px;top:436.26px;font-size:15.116px;line-height:15.116px;color:#1e1e1e;transform:scaleX(0.6308);">11-07-1987</div>
<div class="t" style="left:1084.96px;top:436.26px;font-size:15.116px;line-height:15.116px;color:#1e1e1e;transform:scaleX(0.6209);">36</div>
<div class="t" style="left:1098.50px;top:436.26px;font-size:15.116px;line-height:15.116px;color:#1e1e1e;transform:scaleX(0.6209);">9766866044</div>
<div class="t" style="left:1153.50px;top:436.26px;font-size:15.116px;line-height:15.116px;color:#1e1e1e;transform:scaleX(0.5668);">IT</div>
<div class="t" style="left:572.85px;top:458.10px;font-size:15.116px;line-height:15.116px;color:#1e1e1e;transform:scaleX(0.6135);">EMP1011</div>
<div class="t" style="left:617.20px;top:458.10px;font-size:15.116px;line-height:15.116px;color:#1e1e1e;transform:scaleX(0.6047);">Harsh</div>
<div class="t" style="left:665.10px;top:458.10px;font-size:15.116px;line-height:15.116px;color:#1e1e1e;transform:scaleX(0.6489);">Mohan</div>
<div class="t" style="left:697.42px;top:458.10px;font-size:15.116px;line-height:15.116px;color:#1e1e1e;transform:scaleX(0.6031);">Chauhan</div>
<div class="t" style="left:740.80px;top:458.10px;font-size:15.116px;line-height:15.116px;color:#1e1e1e;transform:scaleX(0.6084);">24 ,</div>
<div class="t" style="left:758.47px;top:458.10px;font-size:15.116px;line-height:15.116px;color:#1e1e1e;transform:scaleX(0.6360);">Nehru</div>
<div class="t" style="left:786.98px;top:458.10px;font-size:15.116px;line-height:15.116px;color:#1e1e1e;transform:scaleX(0.6173);">NagarNagarMarg</div>
<div class="t" style="left:870.30px;top:458.10px;font-size:15.116px;line-height:15.116px;color:#1e1e1e;transform:scaleX(0.6071);">Jaipur</div>
<div class="t" style="left:912.60px;top:458.10px;font-size:15.116px;line-height:15.116px;color:#1e1e1e;transform:scaleX(0.6206);">Bihar</div>
<div class="t" style="left:991.88px;top:458.10px;font-size:15.116px;line-height:15.116px;color:#1e1e1e;transform:scaleX(0.6351);">110065</div>
<div class="t" style="left:1027.53px;top:458.10px;font-size:15.116px;line-height:15.116px;color:#1e1e1e;transform:scaleX(0.6308);">20-11-1986</div>
<div class="t" style="left:1084.96px;top:458.10px;font-size:15.116px;line-height:15.116px;color:#1e1e1e;transform:scaleX(0.6209);">25</div>
<div class="t" style="left:1098.50px;top:458.10px;font-size:15.116px;line-height:15.116px;color:#1e1e1e;transform:scaleX(0.6209);">9001423723</div>
<div class="t" style="left:1153.50px;top:458.10px;font-size:15.116px;line-height:15.116px;color:#1e1e1e;transform:scaleX(0.5602);">Sales</div>
<div class="t" style="left:572.85px;top:479.94px;font-size:15.116px;line-height:15.116px;color:#1e1e1e;transform:scaleX(0.6031);">EMP1012</div>
<div class="t" style="left:617.20px;top:479.94px;font-size:15.116px;line-height:15.116px;color:#1e1e1e;transform:scaleX(0.6047);">Harsh</div>
<div class="t" style="left:665.10px;top:479.94px;font-size:15.116px;line-height:15.116px;color:#1e1e1e;transform:scaleX(0.6489);">Mohan</div>
<div class="t" style="left:697.42px;top:479.94px;font-size:15.116px;line-height:15.116px;color:#1e1e1e;transform:scaleX(0.6031);">Chauhan</div>
<div class="t" style="left:740.80px;top:479.94px;font-size:15.116px;line-height:15.116px;color:#1e1e1e;transform:scaleX(0.6084);">12 ,</div>
<div class="t" style="left:758.47px;top:479.94px;font-size:15.116px;line-height:15.116px;color:#1e1e1e;transform:scaleX(0.5961);">Park</div>
<div class="t" style="left:779.32px;top:479.94px;font-size:15.116px;line-height:15.116px;color:#1e1e1e;transform:scaleX(0.6270);">AvenueAvenueMarg</div>
<div class="t" style="left:870.30px;top:479.94px;font-size:15.116px;line-height:15.116px;color:#1e1e1e;transform:scaleX(0.6194);">Bhopal</div>
<div class="t" style="left:912.60px;top:479.94px;font-size:15.116px;line-height:15.116px;color:#1e1e1e;transform:scaleX(0.6151);">Punjab</div>
<div class="t" style="left:991.88px;top:479.94px;font-size:15.116px;line-height:15.116px;color:#1e1e1e;transform:scaleX(0.6209);">226010</div>
<div class="t" style="left:1027.53px;top:479.94px;font-size:15.116px;line-height:15.116px;color:#1e1e1e;transform:scaleX(0.6216);">18-12-1998</div>
<div class="t" style="left:1084.96px;top:479.94px;font-size:15.116px;line-height:15.116px;color:#1e1e1e;transform:scaleX(0.6209);">30</div>
<div class="t" style="left:1098.50px;top:479.94px;font-size:15.116px;line-height:15.116px;color:#1e1e1e;transform:scaleX(0.6209);">9088995141</div>
<div class="t" style="left:1153.50px;top:479.94px;font-size:15.116px;line-height:15.116px;color:#1e1e1e;transform:scaleX(0.5668);">IT</div>
<div class="t" style="left:572.85px;top:501.78px;font-size:15.116px;line-height:15.116px;color:#1e1e1e;transform:scaleX(0.6031);">EMP1013</div>
<div class="t" style="left:617.20px;top:501.78px;font-size:15.116px;line-height:15.116px;color:#1e1e1e;transform:scaleX(0.6627);">Monu</div>
<div class="t" style="left:665.10px;top:501.78px;font-size:15.116px;line-height:15.116px;color:#1e1e1e;transform:scaleX(0.5978);">Jaideep</div>
<div class="t" style="left:699.08px;top:501.78px;font-size:15.116px;line-height:15.116px;color:#1e1e1e;transform:scaleX(0.6174);">Thakur</div>
<div class="t" style="left:740.80px;top:501.78px;font-size:15.116px;line-height:15.116px;color:#1e1e1e;transform:scaleX(0.6084);">33 ,</div>
<div class="t" style="left:758.47px;top:501.78px;font-size:15.116px;line-height:15.116px;color:#1e1e1e;transform:scaleX(0.6129);">Green</div>
<div class="t" style="left:786.55px;top:501.78px;font-size:15.116px;line-height:15.116px;color:#1e1e1e;transform:scaleX(0.6132);">ParkParkMarg</div>
<div class="t" style="left:870.30px;top:501.78px;font-size:15.116px;line-height:15.116px;color:#1e1e1e;transform:scaleX(0.6071);">Jaipur</div>
<div class="t" style="left:912.60px;top:501.78px;font-size:15.116px;line-height:15.116px;color:#1e1e1e;transform:scaleX(0.6151);">Punjab</div>
<div class="t" style="left:991.88px;top:501.78px;font-size:15.116px;line-height:15.116px;color:#1e1e1e;transform:scaleX(0.6209);">208002</div>
<div class="t" style="left:1027.53px;top:501.78px;font-size:15.116px;line-height:15.116px;color:#1e1e1e;transform:scaleX(0.6216);">20-03-1987</div>
<div class="t" style="left:1084.96px;top:501.78px;font-size:15.116px;line-height:15.116px;color:#1e1e1e;transform:scaleX(0.6209);">35</div>
<div class="t" style="left:1098.50px;top:501.78px;font-size:15.116px;line-height:15.116px;color:#1e1e1e;transform:scaleX(0.6209);">9513075585</div>
<div class="t" style="left:1153.50px;top:501.78px;font-size:15.116px;line-height:15.116px;color:#1e1e1e;transform:scaleX(0.5668);">IT</div>
<div class="t" style="left:572.85px;top:523.62px;font-size:15.116px;line-height:15.116px;color:#1e1e1e;transform:scaleX(0.6031);">EMP1014</div>
<div class="t" style="left:617.20px;top:523.62px;font-size:15.116px;line-height:15.116px;color:#1e1e1e;transform:scaleX(0.6269);">Mahesh</div>
<div class="t" style="left:665.10px;top:523.62px;font-size:15.116px;line-height:15.116px;color:#1e1e1e;transform:scaleX(0.6061);">Subham</div>
<div class="t" style="left:701.56px;top:523.62px;font-size:15.116px;line-height:15.116px;color:#1e1e1e;transform:scaleX(0.6180);">Kumar</div>
<div class="t" style="left:740.80px;top:523.62px;font-size:15.116px;line-height:15.116px;color:#1e1e1e;transform:scaleX(0.6084);">78 ,</div>
<div class="t" style="left:758.47px;top:523.62px;font-size:15.116px;line-height:15.116px;color:#1e1e1e;transform:scaleX(0.5818);">Lake</div>
<div class="t" style="left:779.87px;top:523.62px;font-size:15.116px;line-height:15.116px;color:#1e1e1e;transform:scaleX(0.6394);">ViewViewMarg</div>
<div class="t" style="left:870.30px;top:523.62px;font-size:15.116px;line-height:15.116px;color:#1e1e1e;transform:scaleX(0.6194);">Bhopal</div>
<div class="t" style="left:912.60px;top:523.62px;font-size:15.116px;line-height:15.116px;color:#1e1e1e;transform:scaleX(0.6151);">Punjab</div>
<div class="t" style="left:991.88px;top:523.62px;font-size:15.116px;line-height:15.116px;color:#1e1e1e;transform:scaleX(0.6209);">462002</div>
<div class="t" style="left:1027.53px;top:523.62px;font-size:15.116px;line-height:15.116px;color:#1e1e1e;transform:scaleX(0.6216);">13-03-1991</div>
<div class="t" style="left:1084.96px;top:523.62px;font-size:15.116px;line-height:15.116px;color:#1e1e1e;transform:scaleX(0.6209);">37</div>
<div class="t" style="left:1098.50px;top:523.62px;font-size:15.116px;line-height:15.116px;color:#1e1e1e;transform:scaleX(0.6209);">9487715650</div>
<div class="t" style="left:1153.50px;top:523.62px;font-size:15.116px;line-height:15.116px;color:#1e1e1e;transform:scaleX(0.5668);">IT</div>
<div class="t" style="left:572.85px;top:545.46px;font-size:15.116px;line-height:15.116px;color:#1e1e1e;transform:scaleX(0.6031);">EMP1015</div>
<div class="t" style="left:617.20px;top:545.46px;font-size:15.116px;line-height:15.116px;color:#1e1e1e;transform:scaleX(0.5908);">Suresh</div>
<div class="t" style="left:665.10px;top:545.46px;font-size:15.116px;line-height:15.116px;color:#1e1e1e;transform:scaleX(0.6076);">Kapil</div>
<div class="t" style="left:687.85px;top:545.46px;font-size:15.116px;line-height:15.116px;color:#1e1e1e;transform:scaleX(0.6041);">Tyagi</div>
<div class="t" style="left:740.80px;top:545.46px;font-size:15.116px;line-height:15.116px;color:#1e1e1e;transform:scaleX(0.6084);">33 ,</div>
<div class="t" style="left:758.47px;top:545.46px;font-size:15.116px;line-height:15.116px;color:#1e1e1e;transform:scaleX(0.6129);">Green</div>
<div class="t" style="left:786.55px;top:545.46px;font-size:15.116px;line-height:15.116px;color:#1e1e1e;transform:scaleX(0.6132);">ParkParkMarg</div>
<div class="t" style="left:870.30px;top:545.46px;font-size:15.116px;line-height:15.116px;color:#1e1e1e;transform:scaleX(0.6270);">Delhi</div>
<div class="t" style="left:912.60px;top:545.46px;font-size:15.116px;line-height:15.116px;color:#1e1e1e;transform:scaleX(0.6366);">Maharashtra</div>
<div class="t" style="left:991.88px;top:545.46px;font-size:15.116px;line-height:15.116px;color:#1e1e1e;transform:scaleX(0.6209);">208002</div>
<div class="t" style="left:1027.53px;top:545.46px;font-size:15.116px;line-height:15.116px;color:#1e1e1e;transform:scaleX(0.6308);">18-11-1998</div>
<div class="t" style="left:1084.96px;top:545.46px;font-size:15.116px;line-height:15.116px;color:#1e1e1e;transform:scaleX(0.6209);">30</div>
<div class="t" style="left:1098.50px;top:545.46px;font-size:15.116px;line-height:15.116px;color:#1e1e1e;transform:scaleX(0.6209);">9828865020</div>
<div class="t" style="left:1153.50px;top:545.46px;font-size:15.116px;line-height:15.116px;color:#1e1e1e;transform:scaleX(0.5602);">Sales</div>
<div class="t" style="left:572.85px;top:567.30px;font-size:15.116px;line-height:15.116px;color:#1e1e1e;transform:scaleX(0.6031);">EMP1016</div>
<div class="t" style="left:617.20px;top:567.30px;font-size:15.116px;line-height:15.116px;color:#1e1e1e;transform:scaleX(0.5856);">Rajesh</div>
<div class="t" style="left:665.10px;top:567.30px;font-size:15.116px;line-height:15.116px;color:#1e1e1e;transform:scaleX(0.6692);">Nitin</div>
<div class="t" style="left:687.67px;top:567.30px;font-size:15.116px;line-height:15.116px;color:#1e1e1e;transform:scaleX(0.6180);">Kumar</div>
<div class="t" style="left:740.80px;top:567.30px;font-size:15.116px;line-height:15.116px;color:#1e1e1e;transform:scaleX(0.6084);">65 ,</div>
<div class="t" style="left:758.47px;top:567.30px;font-size:15.116px;line-height:15.116px;color:#1e1e1e;transform:scaleX(0.5961);">Residency</div>
<div class="t" style="left:802.87px;top:567.30px;font-size:15.116px;line-height:15.116px;color:#1e1e1e;transform:scaleX(0.6246);">AreaAreaMarg</div>
<div class="t" style="left:870.30px;top:567.30px;font-size:15.116px;line-height:15.116px;color:#1e1e1e;transform:scaleX(0.6064);">Chennai</div>
<div class="t" style="left:912.60px;top:567.30px;font-size:15.116px;line-height:15.116px;color:#1e1e1e;transform:scaleX(0.6151);">Punjab</div>
<div class="t" style="left:991.88px;top:567.30px;font-size:15.116px;line-height:15.116px;color:#1e1e1e;transform:scaleX(0.6209);">452001</div>
<div class="t" style="left:1027.53px;top:567.30px;font-size:15.116px;line-height:15.116px;color:#1e1e1e;transform:scaleX(0.6216);">13-12-1997</div>
<div class="t" style="left:1084.96px;top:567.30px;font-size:15.116px;line-height:15.116px;color:#1e1e1e;transform:scaleX(0.6209);">38</div>
<div class="t" style="left:1098.50px;top:567.30px;font-size:15.116px;line-height:15.116px;color:#1e1e1e;transform:scaleX(0.6209);">9702737736</div>
<div class="t" style="left:1153.50px;top:567.30px;font-size:15.116px;line-height:15.116px;color:#1e1e1e;transform:scaleX(0.6012);">Finance</div>
<div class="t" style="left:560.14px;top:217.55px;font-size:15.407px;line-height:15.407px;color:#555;transform:scaleX(0.5500);">1</div>
<div class="t" style="left:560.14px;top:239.45px;font-size:15.407px;line-height:15.407px;color:#555;transform:scaleX(0.5500);">2</div>
<div class="t" style="left:560.14px;top:261.29px;font-size:15.407px;line-height:15.407px;color:#555;transform:scaleX(0.5500);">3</div>
<div class="t" style="left:560.14px;top:283.13px;font-size:15.407px;line-height:15.407px;color:#555;transform:scaleX(0.5500);">4</div>
<div class="t" style="left:560.14px;top:304.97px;font-size:15.407px;line-height:15.407px;color:#555;transform:scaleX(0.5500);">5</div>
<div class="t" style="left:560.14px;top:326.81px;font-size:15.407px;line-height:15.407px;color:#555;transform:scaleX(0.5500);">6</div>
<div class="t" style="left:560.14px;top:348.65px;font-size:15.407px;line-height:15.407px;color:#555;transform:scaleX(0.5500);">7</div>
<div class="t" style="left:560.14px;top:370.49px;font-size:15.407px;line-height:15.407px;color:#555;transform:scaleX(0.5500);">8</div>
<div class="t" style="left:560.14px;top:392.33px;font-size:15.407px;line-height:15.407px;color:#555;transform:scaleX(0.5500);">9</div>
<div class="t" style="left:557.79px;top:414.17px;font-size:15.407px;line-height:15.407px;color:#555;transform:scaleX(0.5500);">10</div>
<div class="t" style="left:558.10px;top:436.01px;font-size:15.407px;line-height:15.407px;color:#555;transform:scaleX(0.5500);">11</div>
<div class="t" style="left:557.79px;top:457.85px;font-size:15.407px;line-height:15.407px;color:#555;transform:scaleX(0.5500);">12</div>
<div class="t" style="left:557.79px;top:479.69px;font-size:15.407px;line-height:15.407px;color:#555;transform:scaleX(0.5500);">13</div>
<div class="t" style="left:557.79px;top:501.53px;font-size:15.407px;line-height:15.407px;color:#555;transform:scaleX(0.5500);">14</div>
<div class="t" style="left:557.79px;top:523.37px;font-size:15.407px;line-height:15.407px;color:#555;transform:scaleX(0.5500);">15</div>
<div class="t" style="left:557.79px;top:545.21px;font-size:15.407px;line-height:15.407px;color:#555;transform:scaleX(0.5500);">16</div>
<div class="t" style="left:557.79px;top:567.05px;font-size:15.407px;line-height:15.407px;color:#555;transform:scaleX(0.5500);">17</div>
</div></div>
</body></html>
